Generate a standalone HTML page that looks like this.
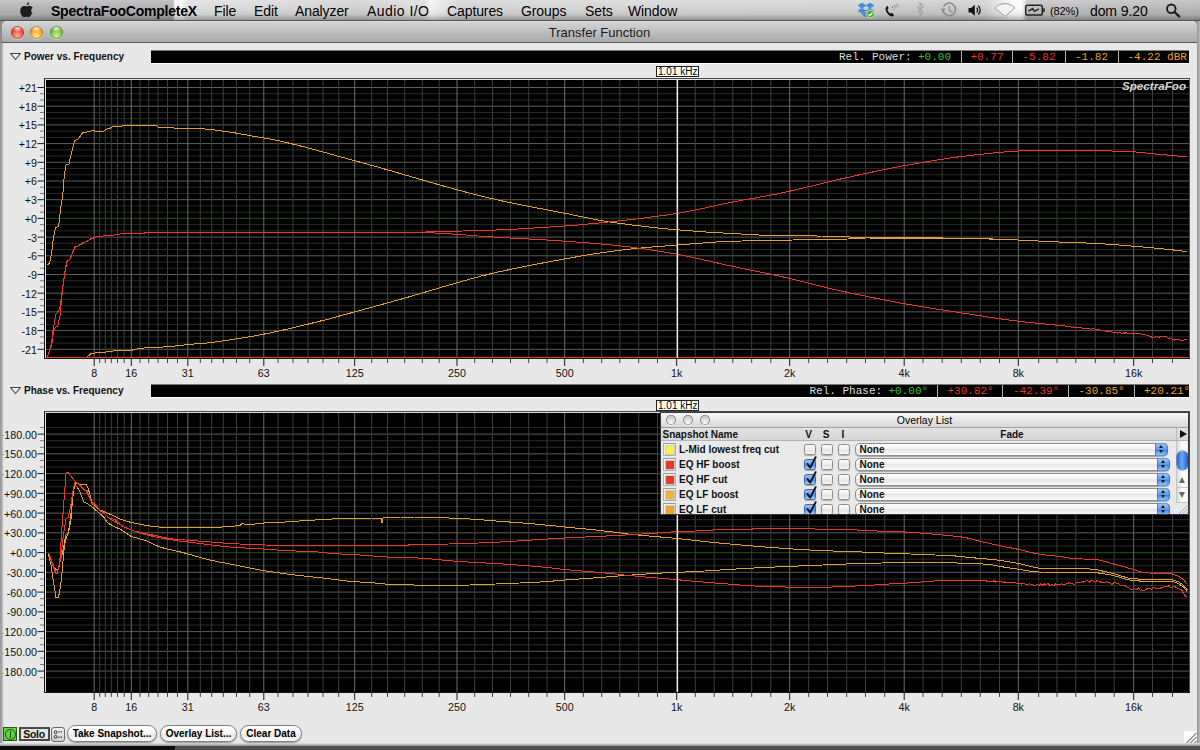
<!DOCTYPE html>
<html><head><meta charset="utf-8"><title>Transfer Function</title>
<style>
html,body{margin:0;padding:0}
body{width:1200px;height:750px;overflow:hidden;position:relative;background:#8c8c8c;font-family:"Liberation Sans", sans-serif;color:#000}
.abs{position:absolute;white-space:nowrap}
#menubar{left:0;top:0;width:1200px;height:21px;background:linear-gradient(to bottom,rgba(255,255,255,.25) 0,rgba(255,255,255,0) 45%,rgba(0,0,0,.06) 72%,rgba(0,0,0,.30) 100%),linear-gradient(to right,#b4b4b4 0px,#aeaeae 173px,#f6f6f6 175px,#f6f6f6 182px,#dcdcdc 187px,#d4d4d4 300px,#cecece 360px,#dcdcdc 424px,#f2f2f2 431px,#e4e4e4 444px,#d2d2d2 460px,#d4d4d4 600px,#d0d0d0 860px,#c8c8c8 900px,#cccccc 985px,#e8e8e8 1002px,#fafafa 1012px,#fafafa 1022px,#bebebe 1027px,#b6b6b6 1200px);border-bottom:1px solid #555;box-sizing:border-box}
#menubar .mi{position:absolute;top:2px;letter-spacing:-0.1px;font-size:14px;line-height:18px;white-space:nowrap}
#win{left:2px;top:21px;width:1195px;height:724px;background:#e8e8e8;border-radius:5px 5px 0 0;overflow:hidden}
#title{left:0;top:0;width:1195px;height:21px;background:linear-gradient(#e4e4e4 0,#d4d4d4 5%,#a8a8a8);border-bottom:1px solid #5a5a5a;text-align:center;font-size:13px;line-height:24px;color:#1a1a1a}
.tl{position:absolute;top:5.2px;width:13px;height:13px;border-radius:50%;box-shadow:0 0 0 0.7px rgba(0,0,0,.35) inset,0 1px 1px rgba(255,255,255,.5)}
.bar{left:151px;width:1038px;height:12px;background:#000;border-top:1px solid #777;border-bottom:1px solid #fff}
.hdr{left:24px;font-size:10px;font-weight:bold;line-height:12px;color:#111}
.tri{left:10px;width:0;height:0;border-left:5px solid transparent;border-right:5px solid transparent;border-top:7px solid #555}
.ro{font-family:"Liberation Mono", monospace;font-size:11px;line-height:12px;top:0;color:#ddd}
.cur{left:656px;width:40px;height:9px;border:1px solid #222;background:#fff;font-size:10px;line-height:10px;padding-left:1px;overflow:hidden}
#ov{background:#e9e9e9;box-shadow:0 0 0 1px #3a3a3a;overflow:hidden}
.gl{width:10px;height:10px;border-radius:50%;background:radial-gradient(circle at 50% 80%,#fafafa,#dcdcdc 45%,#b8b8b8 90%);box-shadow:0 0 0 0.8px #8c8c8c inset,0 1px 0 rgba(255,255,255,.7)}
.ovb{font-size:10px;font-weight:bold;line-height:12px;color:#111}
.sw{width:11px;height:11px;border:1px solid #b0b0b0;border-top-color:#9a9a9a;background:#f2f2f2}
.sw div{position:absolute;left:1.5px;top:1.5px;width:8px;height:8px;box-shadow:0 0 0 0.5px rgba(0,0,0,.35)}
.cb{width:10px;height:9.5px;border-radius:2.5px;border:0.8px solid #8c8c8c;background:linear-gradient(#fdfdfd,#ececec 50%,#e0e0e0 51%,#f8f8f8);box-shadow:0 1px 1px rgba(0,0,0,.25)}
.cb.on{border-color:#3a62b0;background:linear-gradient(#9cc4f4,#5f9cea 50%,#3f84e4 51%,#a8d4fa)}
.pop{height:11.5px;border-radius:5px;border:0.8px solid #8e8e8e;background:linear-gradient(#fff,#f2f2f2 45%,#e6e6e6 50%,#f6f6f6 90%,#fff);box-shadow:0 1px 1px rgba(0,0,0,.3)}
.pop .st{position:absolute;right:-1px;top:-1px;width:13px;height:13px;border-radius:0 5px 5px 0;background:linear-gradient(#a8ccf6,#5a98ec 50%,#3c80e2 51%,#9cd0fa);box-shadow:0 0 0 0.6px #3c62ac inset}
.pop .st i{position:absolute;left:4px;width:0;height:0;border-left:2.5px solid transparent;border-right:2.5px solid transparent}
.pop .st i.u{top:2.5px;border-bottom:3px solid #111}
.pop .st i.d{top:7.5px;border-top:3px solid #111}
.pill{top:725px;height:15px;border:1px solid #7e7e7e;border-radius:9px;background:linear-gradient(#fff,#f4f4f4 50%,#e6e6e6 51%,#fafafa);font-size:10px;font-weight:bold;line-height:15px;text-align:center;box-shadow:0 1px 1.5px rgba(0,0,0,.35)}
</style></head><body>
<div id="menubar" class="abs"><svg class="abs" style="left:0;top:0" width="1200" height="21" viewBox="0 0 1200 21">
<!-- apple -->
<g fill="#1c1c1c"><path d="M26.6 5.2c-.1-1.500 1.100-2.900 2.500-3.300.2 1.600-1.100 3.100-2.500 3.300z"/><path d="M31.900 13.300c-.5 1.200-.8 1.700-1.500 2.700-.9 1.400-2.200 1.500-2.900 1-.9-.5-1.700-.5-2.600 0-.9.500-1.900.400-2.800-.9-2.200-3.100-2.300-6.800-.9-8.600 1-1.400 2.600-1.900 3.900-1.400.9.300 1.500.500 2.100.300.700-.2 1.700-.8 3-.5 1 .2 2 .8 2.600 1.900-2.300 1.400-1.900 4.600.1 5.500z"/></g>
<!-- dropbox -->
<g fill="#3d8fe0" stroke="#2a6fc0" stroke-width=".4"><path d="M862 3l-4 2.600 4 2.600 4-2.600z"/><path d="M870 3l-4 2.600 4 2.600 4-2.600z"/><path d="M858 10.800l4 2.600 4-2.600-4-2.600z"/><path d="M870 8.200l-4 2.600 4 2.600 4-2.600z"/><path d="M862 14.300l4 2.600 4-2.600-4-2.400z"/></g>
<circle cx="870.500" cy="14" r="4" fill="#4aa82a" stroke="#e8e8e8" stroke-width=".8"/><path d="M868.400 14.100l1.500 1.600 2.600-3.200" fill="none" stroke="#fff" stroke-width="1.200"/>
<!-- phone -->
<path d="M886.200 7.200c-1.200 1-.9 3.200.9 5.800 1.900 2.700 4 4 5.600 3.300l1.400-.9-2-2.700-1.300.7c-.6.200-1.500-.5-2.300-1.700-.9-1.200-1.200-2.300-.8-2.800l1.100-.9-1.700-2.300z" fill="#111"/>
<g fill="#666"><circle cx="892.500" cy="7.500" r=".7"/><circle cx="894.700" cy="6" r=".7"/><circle cx="896.800" cy="4.600" r=".7"/><circle cx="893.700" cy="9.300" r=".5"/><circle cx="896" cy="7.800" r=".5"/><circle cx="898" cy="6.400" r=".5"/></g>
<!-- bluetooth -->
<path d="M917 6.300l6.200 6-3.200 3.300v-12.600l3.200 3.300-6.200 6" fill="none" stroke="#a2a2a2" stroke-width="1.100"/>
<!-- time machine -->
<g fill="none" stroke="#8a8a8a" stroke-width="1.500"><path d="M943.200 11.300a6.300 6.300 0 1 0 .3-4.600"/><path d="M949.300 6v4.200l3 1.800" stroke-width="1.200"/></g><path d="M940.600 8.400l5 .3-2.600 3.700z" fill="#8a8a8a"/>
<!-- volume -->
<path d="M968.500 8h2.600l3.700-3.300v11l-3.700-3.300h-2.600z" fill="#111"/><path d="M976.600 7.800a3.200 3.200 0 0 1 0 4.800M978.300 5.800a6 6 0 0 1 0 8.800" fill="none" stroke="#111" stroke-width="1.300"/>
<!-- airport -->
<path d="M1005 16.300l-10-8.300a13.500 13.500 0 0 1 20 0z" fill="#f4f4f4" stroke="#9c9c9c" stroke-width="1"/>
<!-- battery -->
<rect x="1025.700" y="5.200" width="16.600" height="9.800" rx="1.800" fill="none" stroke="#222" stroke-width="1.500"/><rect x="1043.200" y="8.300" width="1.600" height="3.600" fill="#222"/><path d="M1028.500 11.200l4.200-2.600 1.600 2.800 4.600-2.600" fill="none" stroke="#222" stroke-width="1.400"/>
<!-- spotlight -->
<circle cx="1171.300" cy="8.800" r="4.300" fill="none" stroke="#1a1a1a" stroke-width="1.800"/><path d="M1174.500 12l4.800 4.600" stroke="#1a1a1a" stroke-width="2.200" stroke-linecap="round"/>
</svg><span class="mi" style="left:51px;font-weight:bold;letter-spacing:-0.22px;">SpectraFooCompleteX</span><span class="mi" style="left:214px;">File</span><span class="mi" style="left:254px;">Edit</span><span class="mi" style="left:295px;">Analyzer</span><span class="mi" style="left:367px;"><span style="letter-spacing:.45px">Audio I/O</span></span><span class="mi" style="left:447px;">Captures</span><span class="mi" style="left:521px;">Groups</span><span class="mi" style="left:585px;">Sets</span><span class="mi" style="left:628px;">Window</span><span class="mi" style="left:1050px;"><span style="font-size:11px;position:relative;top:-1px">(82%)</span></span><span class="mi" style="left:1090px;">dom 9.20</span></div>
<div id="win" class="abs">
  <div id="title" class="abs">Transfer Function</div>
  <div class="tl" style="left:8.5px;background:radial-gradient(ellipse 45% 28% at 50% 18%,rgba(255,255,255,.85),rgba(255,255,255,0)),radial-gradient(circle at 50% 75%,#ffb0a0,#e8402c 55%,#b02010)"></div>
  <div class="tl" style="left:28px;background:radial-gradient(ellipse 45% 28% at 50% 18%,rgba(255,255,255,.85),rgba(255,255,255,0)),radial-gradient(circle at 50% 75%,#ffe79a,#f0a020 55%,#c07010)"></div>
  <div class="tl" style="left:47.5px;background:radial-gradient(ellipse 45% 28% at 50% 18%,rgba(255,255,255,.85),rgba(255,255,255,0)),radial-gradient(circle at 50% 75%,#d8f0a0,#6cbf3c 55%,#3c8a20)"></div>
</div>
<svg class="abs" style="left:9px;top:52px" width="13" height="9"><path d="M1.500 1.500h10l-5 6z" fill="#e8f0fa" stroke="#444" stroke-width="1.100" stroke-linejoin="round"/></svg>
<div class="abs hdr" style="top:51px">Power vs. Frequency</div>
<div class="abs bar" style="top:50px"><span class="abs ro" style="left:688px;color:#dcdcdc">Rel. Power:</span><span class="abs ro" style="left:767px;color:#35c035">+0.00</span><span class="abs ro" style="left:819.5px;color:#e03a26">+0.77</span><span class="abs ro" style="left:871.5px;color:#e03a26">-5.82</span><span class="abs ro" style="left:924px;color:#e8a030">-1.82</span><span class="abs ro" style="left:976.5px;color:#e8a030">-4.22 dBR</span><span class="abs" style="left:809.5px;top:0;width:1px;height:12px;background:#b0b0b0"></span><span class="abs" style="left:861px;top:0;width:1px;height:12px;background:#b0b0b0"></span><span class="abs" style="left:914px;top:0;width:1px;height:12px;background:#b0b0b0"></span><span class="abs" style="left:966.5px;top:0;width:1px;height:12px;background:#b0b0b0"></span></div>
<svg class="abs" style="left:9px;top:386px" width="13" height="9"><path d="M1.500 1.500h10l-5 6z" fill="#e8f0fa" stroke="#444" stroke-width="1.100" stroke-linejoin="round"/></svg>
<div class="abs hdr" style="top:385px">Phase vs. Frequency</div>
<div class="abs bar" style="top:384px"><span class="abs ro" style="left:658.5px;color:#dcdcdc">Rel. Phase:</span><span class="abs ro" style="left:737.5px;color:#35c035">+0.00°</span><span class="abs ro" style="left:796.5px;color:#e03a26">+30.82°</span><span class="abs ro" style="left:862px;color:#e03a26">-42.39°</span><span class="abs ro" style="left:927.5px;color:#e8a030">-30.85°</span><span class="abs ro" style="left:993px;color:#e8a030">+20.21°</span><span class="abs" style="left:785.5px;top:0;width:1px;height:12px;background:#b0b0b0"></span><span class="abs" style="left:851px;top:0;width:1px;height:12px;background:#b0b0b0"></span><span class="abs" style="left:917px;top:0;width:1px;height:12px;background:#b0b0b0"></span><span class="abs" style="left:982.5px;top:0;width:1px;height:12px;background:#b0b0b0"></span></div>
<svg width="1200" height="750" viewBox="0 0 1200 750" style="position:absolute;left:0;top:0">
<rect x="44" y="78" width="1146" height="281" fill="#4a4a4a"/>
<rect x="44" y="78" width="1" height="281" fill="#161616"/>
<rect x="44" y="358" width="1146" height="1" fill="#161616"/>
<rect x="45" y="79" width="1144" height="279" fill="#e0e0e0"/>
<rect x="46" y="80" width="1143" height="278" fill="#000"/>
<g stroke-width="1"><line x1="46" x2="1189" y1="349.29" y2="349.29" stroke="#5c5c5c"/><line x1="46" x2="1189" y1="343.06" y2="343.06" stroke="#2a2a2a"/><line x1="46" x2="1189" y1="336.83" y2="336.83" stroke="#2a2a2a"/><line x1="46" x2="1189" y1="330.59" y2="330.59" stroke="#5c5c5c"/><line x1="46" x2="1189" y1="324.36" y2="324.36" stroke="#2a2a2a"/><line x1="46" x2="1189" y1="318.13" y2="318.13" stroke="#2a2a2a"/><line x1="46" x2="1189" y1="311.89" y2="311.89" stroke="#5c5c5c"/><line x1="46" x2="1189" y1="305.66" y2="305.66" stroke="#2a2a2a"/><line x1="46" x2="1189" y1="299.43" y2="299.43" stroke="#2a2a2a"/><line x1="46" x2="1189" y1="293.20" y2="293.20" stroke="#5c5c5c"/><line x1="46" x2="1189" y1="286.96" y2="286.96" stroke="#2a2a2a"/><line x1="46" x2="1189" y1="280.73" y2="280.73" stroke="#2a2a2a"/><line x1="46" x2="1189" y1="274.50" y2="274.50" stroke="#5c5c5c"/><line x1="46" x2="1189" y1="268.26" y2="268.26" stroke="#2a2a2a"/><line x1="46" x2="1189" y1="262.03" y2="262.03" stroke="#2a2a2a"/><line x1="46" x2="1189" y1="255.80" y2="255.80" stroke="#5c5c5c"/><line x1="46" x2="1189" y1="249.56" y2="249.56" stroke="#2a2a2a"/><line x1="46" x2="1189" y1="243.33" y2="243.33" stroke="#2a2a2a"/><line x1="46" x2="1189" y1="237.10" y2="237.10" stroke="#5c5c5c"/><line x1="46" x2="1189" y1="230.87" y2="230.87" stroke="#2a2a2a"/><line x1="46" x2="1189" y1="224.63" y2="224.63" stroke="#2a2a2a"/><line x1="46" x2="1189" y1="218.40" y2="218.40" stroke="#1b4210" stroke-width="1.3"/><line x1="46" x2="1189" y1="212.17" y2="212.17" stroke="#2a2a2a"/><line x1="46" x2="1189" y1="205.93" y2="205.93" stroke="#2a2a2a"/><line x1="46" x2="1189" y1="199.70" y2="199.70" stroke="#5c5c5c"/><line x1="46" x2="1189" y1="193.47" y2="193.47" stroke="#2a2a2a"/><line x1="46" x2="1189" y1="187.24" y2="187.24" stroke="#2a2a2a"/><line x1="46" x2="1189" y1="181.00" y2="181.00" stroke="#5c5c5c"/><line x1="46" x2="1189" y1="174.77" y2="174.77" stroke="#2a2a2a"/><line x1="46" x2="1189" y1="168.54" y2="168.54" stroke="#2a2a2a"/><line x1="46" x2="1189" y1="162.30" y2="162.30" stroke="#5c5c5c"/><line x1="46" x2="1189" y1="156.07" y2="156.07" stroke="#2a2a2a"/><line x1="46" x2="1189" y1="149.84" y2="149.84" stroke="#2a2a2a"/><line x1="46" x2="1189" y1="143.60" y2="143.60" stroke="#5c5c5c"/><line x1="46" x2="1189" y1="137.37" y2="137.37" stroke="#2a2a2a"/><line x1="46" x2="1189" y1="131.14" y2="131.14" stroke="#2a2a2a"/><line x1="46" x2="1189" y1="124.91" y2="124.91" stroke="#5c5c5c"/><line x1="46" x2="1189" y1="118.67" y2="118.67" stroke="#2a2a2a"/><line x1="46" x2="1189" y1="112.44" y2="112.44" stroke="#2a2a2a"/><line x1="46" x2="1189" y1="106.21" y2="106.21" stroke="#5c5c5c"/><line x1="46" x2="1189" y1="99.97" y2="99.97" stroke="#2a2a2a"/><line x1="46" x2="1189" y1="93.74" y2="93.74" stroke="#2a2a2a"/><line x1="46" x2="1189" y1="87.51" y2="87.51" stroke="#5c5c5c"/><line x1="94.20" x2="94.20" y1="80" y2="358" stroke="#6c6c6c"/><line x1="99.70" x2="99.70" y1="80" y2="358" stroke="#3c3c3c"/><line x1="105.30" x2="105.30" y1="80" y2="358" stroke="#3c3c3c"/><line x1="111.30" x2="111.30" y1="80" y2="358" stroke="#3c3c3c"/><line x1="117.50" x2="117.50" y1="80" y2="358" stroke="#3c3c3c"/><line x1="124.20" x2="124.20" y1="80" y2="358" stroke="#3c3c3c"/><line x1="131.30" x2="131.30" y1="80" y2="358" stroke="#6c6c6c"/><line x1="140.00" x2="140.00" y1="80" y2="358" stroke="#3c3c3c"/><line x1="148.70" x2="148.70" y1="80" y2="358" stroke="#3c3c3c"/><line x1="158.00" x2="158.00" y1="80" y2="358" stroke="#3c3c3c"/><line x1="167.50" x2="167.50" y1="80" y2="358" stroke="#3c3c3c"/><line x1="177.50" x2="177.50" y1="80" y2="358" stroke="#3c3c3c"/><line x1="187.80" x2="187.80" y1="80" y2="358" stroke="#6c6c6c"/><line x1="200.30" x2="200.30" y1="80" y2="358" stroke="#3c3c3c"/><line x1="211.70" x2="211.70" y1="80" y2="358" stroke="#3c3c3c"/><line x1="223.30" x2="223.30" y1="80" y2="358" stroke="#3c3c3c"/><line x1="236.50" x2="236.50" y1="80" y2="358" stroke="#3c3c3c"/><line x1="249.70" x2="249.70" y1="80" y2="358" stroke="#3c3c3c"/><line x1="263.80" x2="263.80" y1="80" y2="358" stroke="#6c6c6c"/><line x1="278.00" x2="278.00" y1="80" y2="358" stroke="#3c3c3c"/><line x1="293.00" x2="293.00" y1="80" y2="358" stroke="#3c3c3c"/><line x1="308.00" x2="308.00" y1="80" y2="358" stroke="#3c3c3c"/><line x1="323.00" x2="323.00" y1="80" y2="358" stroke="#3c3c3c"/><line x1="338.70" x2="338.70" y1="80" y2="358" stroke="#3c3c3c"/><line x1="354.70" x2="354.70" y1="80" y2="358" stroke="#6c6c6c"/><line x1="371.70" x2="371.70" y1="80" y2="358" stroke="#3c3c3c"/><line x1="387.50" x2="387.50" y1="80" y2="358" stroke="#3c3c3c"/><line x1="404.70" x2="404.70" y1="80" y2="358" stroke="#3c3c3c"/><line x1="422.30" x2="422.30" y1="80" y2="358" stroke="#3c3c3c"/><line x1="439.20" x2="439.20" y1="80" y2="358" stroke="#3c3c3c"/><line x1="457.00" x2="457.00" y1="80" y2="358" stroke="#6c6c6c"/><line x1="474.70" x2="474.70" y1="80" y2="358" stroke="#3c3c3c"/><line x1="492.50" x2="492.50" y1="80" y2="358" stroke="#3c3c3c"/><line x1="510.50" x2="510.50" y1="80" y2="358" stroke="#3c3c3c"/><line x1="528.70" x2="528.70" y1="80" y2="358" stroke="#3c3c3c"/><line x1="547.00" x2="547.00" y1="80" y2="358" stroke="#3c3c3c"/><line x1="564.70" x2="564.70" y1="80" y2="358" stroke="#6c6c6c"/><line x1="583.30" x2="583.30" y1="80" y2="358" stroke="#3c3c3c"/><line x1="601.70" x2="601.70" y1="80" y2="358" stroke="#3c3c3c"/><line x1="619.80" x2="619.80" y1="80" y2="358" stroke="#3c3c3c"/><line x1="638.70" x2="638.70" y1="80" y2="358" stroke="#3c3c3c"/><line x1="657.50" x2="657.50" y1="80" y2="358" stroke="#3c3c3c"/><line x1="676.70" x2="676.70" y1="80" y2="358" stroke="#6c6c6c"/><line x1="695.30" x2="695.30" y1="80" y2="358" stroke="#3c3c3c"/><line x1="714.20" x2="714.20" y1="80" y2="358" stroke="#3c3c3c"/><line x1="732.80" x2="732.80" y1="80" y2="358" stroke="#3c3c3c"/><line x1="751.70" x2="751.70" y1="80" y2="358" stroke="#3c3c3c"/><line x1="770.80" x2="770.80" y1="80" y2="358" stroke="#3c3c3c"/><line x1="789.70" x2="789.70" y1="80" y2="358" stroke="#6c6c6c"/><line x1="808.70" x2="808.70" y1="80" y2="358" stroke="#3c3c3c"/><line x1="827.50" x2="827.50" y1="80" y2="358" stroke="#3c3c3c"/><line x1="846.70" x2="846.70" y1="80" y2="358" stroke="#3c3c3c"/><line x1="865.50" x2="865.50" y1="80" y2="358" stroke="#3c3c3c"/><line x1="884.70" x2="884.70" y1="80" y2="358" stroke="#3c3c3c"/><line x1="904.20" x2="904.20" y1="80" y2="358" stroke="#6c6c6c"/><line x1="923.00" x2="923.00" y1="80" y2="358" stroke="#3c3c3c"/><line x1="942.20" x2="942.20" y1="80" y2="358" stroke="#3c3c3c"/><line x1="961.30" x2="961.30" y1="80" y2="358" stroke="#3c3c3c"/><line x1="980.30" x2="980.30" y1="80" y2="358" stroke="#3c3c3c"/><line x1="999.50" x2="999.50" y1="80" y2="358" stroke="#3c3c3c"/><line x1="1018.30" x2="1018.30" y1="80" y2="358" stroke="#6c6c6c"/><line x1="1038.70" x2="1038.70" y1="80" y2="358" stroke="#3c3c3c"/><line x1="1057.00" x2="1057.00" y1="80" y2="358" stroke="#3c3c3c"/><line x1="1075.80" x2="1075.80" y1="80" y2="358" stroke="#3c3c3c"/><line x1="1095.30" x2="1095.30" y1="80" y2="358" stroke="#3c3c3c"/><line x1="1114.20" x2="1114.20" y1="80" y2="358" stroke="#3c3c3c"/><line x1="1133.70" x2="1133.70" y1="80" y2="358" stroke="#6c6c6c"/><line x1="1152.50" x2="1152.50" y1="80" y2="358" stroke="#3c3c3c"/><line x1="1172.50" x2="1172.50" y1="80" y2="358" stroke="#3c3c3c"/></g>
<g font-family='"Liberation Sans", sans-serif' font-size="10.7" fill="#111"><line x1="37.5" x2="44" y1="349.29" y2="349.29" stroke="#1a1a1a"/><text x="37" y="353.7" text-anchor="end">-21</text><line x1="40" x2="44" y1="343.06" y2="343.06" stroke="#777"/><line x1="40" x2="44" y1="336.83" y2="336.83" stroke="#777"/><line x1="37.5" x2="44" y1="330.59" y2="330.59" stroke="#1a1a1a"/><text x="37" y="335.0" text-anchor="end">-18</text><line x1="40" x2="44" y1="324.36" y2="324.36" stroke="#777"/><line x1="40" x2="44" y1="318.13" y2="318.13" stroke="#777"/><line x1="37.5" x2="44" y1="311.89" y2="311.89" stroke="#1a1a1a"/><text x="37" y="316.3" text-anchor="end">-15</text><line x1="40" x2="44" y1="305.66" y2="305.66" stroke="#777"/><line x1="40" x2="44" y1="299.43" y2="299.43" stroke="#777"/><line x1="37.5" x2="44" y1="293.20" y2="293.20" stroke="#1a1a1a"/><text x="37" y="297.6" text-anchor="end">-12</text><line x1="40" x2="44" y1="286.96" y2="286.96" stroke="#777"/><line x1="40" x2="44" y1="280.73" y2="280.73" stroke="#777"/><line x1="37.5" x2="44" y1="274.50" y2="274.50" stroke="#1a1a1a"/><text x="37" y="278.9" text-anchor="end">-9</text><line x1="40" x2="44" y1="268.26" y2="268.26" stroke="#777"/><line x1="40" x2="44" y1="262.03" y2="262.03" stroke="#777"/><line x1="37.5" x2="44" y1="255.80" y2="255.80" stroke="#1a1a1a"/><text x="37" y="260.2" text-anchor="end">-6</text><line x1="40" x2="44" y1="249.56" y2="249.56" stroke="#777"/><line x1="40" x2="44" y1="243.33" y2="243.33" stroke="#777"/><line x1="37.5" x2="44" y1="237.10" y2="237.10" stroke="#1a1a1a"/><text x="37" y="241.5" text-anchor="end">-3</text><line x1="40" x2="44" y1="230.87" y2="230.87" stroke="#777"/><line x1="40" x2="44" y1="224.63" y2="224.63" stroke="#777"/><line x1="37.5" x2="44" y1="218.40" y2="218.40" stroke="#1a1a1a"/><text x="37" y="222.8" text-anchor="end">+0</text><line x1="40" x2="44" y1="212.17" y2="212.17" stroke="#777"/><line x1="40" x2="44" y1="205.93" y2="205.93" stroke="#777"/><line x1="37.5" x2="44" y1="199.70" y2="199.70" stroke="#1a1a1a"/><text x="37" y="204.1" text-anchor="end">+3</text><line x1="40" x2="44" y1="193.47" y2="193.47" stroke="#777"/><line x1="40" x2="44" y1="187.24" y2="187.24" stroke="#777"/><line x1="37.5" x2="44" y1="181.00" y2="181.00" stroke="#1a1a1a"/><text x="37" y="185.4" text-anchor="end">+6</text><line x1="40" x2="44" y1="174.77" y2="174.77" stroke="#777"/><line x1="40" x2="44" y1="168.54" y2="168.54" stroke="#777"/><line x1="37.5" x2="44" y1="162.30" y2="162.30" stroke="#1a1a1a"/><text x="37" y="166.7" text-anchor="end">+9</text><line x1="40" x2="44" y1="156.07" y2="156.07" stroke="#777"/><line x1="40" x2="44" y1="149.84" y2="149.84" stroke="#777"/><line x1="37.5" x2="44" y1="143.60" y2="143.60" stroke="#1a1a1a"/><text x="37" y="148.0" text-anchor="end">+12</text><line x1="40" x2="44" y1="137.37" y2="137.37" stroke="#777"/><line x1="40" x2="44" y1="131.14" y2="131.14" stroke="#777"/><line x1="37.5" x2="44" y1="124.91" y2="124.91" stroke="#1a1a1a"/><text x="37" y="129.3" text-anchor="end">+15</text><line x1="40" x2="44" y1="118.67" y2="118.67" stroke="#777"/><line x1="40" x2="44" y1="112.44" y2="112.44" stroke="#777"/><line x1="37.5" x2="44" y1="106.21" y2="106.21" stroke="#1a1a1a"/><text x="37" y="110.6" text-anchor="end">+18</text><line x1="40" x2="44" y1="99.97" y2="99.97" stroke="#777"/><line x1="40" x2="44" y1="93.74" y2="93.74" stroke="#777"/><line x1="37.5" x2="44" y1="87.51" y2="87.51" stroke="#1a1a1a"/><text x="37" y="91.9" text-anchor="end">+21</text><line x1="94.20" x2="94.20" y1="359" y2="366" stroke="#1a1a1a"/><text x="94.2" y="377" text-anchor="middle">8</text><line x1="99.70" x2="99.70" y1="359" y2="363" stroke="#444"/><line x1="105.30" x2="105.30" y1="359" y2="363" stroke="#444"/><line x1="111.30" x2="111.30" y1="359" y2="363" stroke="#444"/><line x1="117.50" x2="117.50" y1="359" y2="363" stroke="#444"/><line x1="124.20" x2="124.20" y1="359" y2="363" stroke="#444"/><line x1="131.30" x2="131.30" y1="359" y2="366" stroke="#1a1a1a"/><text x="131.3" y="377" text-anchor="middle">16</text><line x1="140.00" x2="140.00" y1="359" y2="363" stroke="#444"/><line x1="148.70" x2="148.70" y1="359" y2="363" stroke="#444"/><line x1="158.00" x2="158.00" y1="359" y2="363" stroke="#444"/><line x1="167.50" x2="167.50" y1="359" y2="363" stroke="#444"/><line x1="177.50" x2="177.50" y1="359" y2="363" stroke="#444"/><line x1="187.80" x2="187.80" y1="359" y2="366" stroke="#1a1a1a"/><text x="187.8" y="377" text-anchor="middle">31</text><line x1="200.30" x2="200.30" y1="359" y2="363" stroke="#444"/><line x1="211.70" x2="211.70" y1="359" y2="363" stroke="#444"/><line x1="223.30" x2="223.30" y1="359" y2="363" stroke="#444"/><line x1="236.50" x2="236.50" y1="359" y2="363" stroke="#444"/><line x1="249.70" x2="249.70" y1="359" y2="363" stroke="#444"/><line x1="263.80" x2="263.80" y1="359" y2="366" stroke="#1a1a1a"/><text x="263.8" y="377" text-anchor="middle">63</text><line x1="278.00" x2="278.00" y1="359" y2="363" stroke="#444"/><line x1="293.00" x2="293.00" y1="359" y2="363" stroke="#444"/><line x1="308.00" x2="308.00" y1="359" y2="363" stroke="#444"/><line x1="323.00" x2="323.00" y1="359" y2="363" stroke="#444"/><line x1="338.70" x2="338.70" y1="359" y2="363" stroke="#444"/><line x1="354.70" x2="354.70" y1="359" y2="366" stroke="#1a1a1a"/><text x="354.7" y="377" text-anchor="middle">125</text><line x1="371.70" x2="371.70" y1="359" y2="363" stroke="#444"/><line x1="387.50" x2="387.50" y1="359" y2="363" stroke="#444"/><line x1="404.70" x2="404.70" y1="359" y2="363" stroke="#444"/><line x1="422.30" x2="422.30" y1="359" y2="363" stroke="#444"/><line x1="439.20" x2="439.20" y1="359" y2="363" stroke="#444"/><line x1="457.00" x2="457.00" y1="359" y2="366" stroke="#1a1a1a"/><text x="457.0" y="377" text-anchor="middle">250</text><line x1="474.70" x2="474.70" y1="359" y2="363" stroke="#444"/><line x1="492.50" x2="492.50" y1="359" y2="363" stroke="#444"/><line x1="510.50" x2="510.50" y1="359" y2="363" stroke="#444"/><line x1="528.70" x2="528.70" y1="359" y2="363" stroke="#444"/><line x1="547.00" x2="547.00" y1="359" y2="363" stroke="#444"/><line x1="564.70" x2="564.70" y1="359" y2="366" stroke="#1a1a1a"/><text x="564.7" y="377" text-anchor="middle">500</text><line x1="583.30" x2="583.30" y1="359" y2="363" stroke="#444"/><line x1="601.70" x2="601.70" y1="359" y2="363" stroke="#444"/><line x1="619.80" x2="619.80" y1="359" y2="363" stroke="#444"/><line x1="638.70" x2="638.70" y1="359" y2="363" stroke="#444"/><line x1="657.50" x2="657.50" y1="359" y2="363" stroke="#444"/><line x1="676.70" x2="676.70" y1="359" y2="366" stroke="#1a1a1a"/><text x="676.7" y="377" text-anchor="middle">1k</text><line x1="695.30" x2="695.30" y1="359" y2="363" stroke="#444"/><line x1="714.20" x2="714.20" y1="359" y2="363" stroke="#444"/><line x1="732.80" x2="732.80" y1="359" y2="363" stroke="#444"/><line x1="751.70" x2="751.70" y1="359" y2="363" stroke="#444"/><line x1="770.80" x2="770.80" y1="359" y2="363" stroke="#444"/><line x1="789.70" x2="789.70" y1="359" y2="366" stroke="#1a1a1a"/><text x="789.7" y="377" text-anchor="middle">2k</text><line x1="808.70" x2="808.70" y1="359" y2="363" stroke="#444"/><line x1="827.50" x2="827.50" y1="359" y2="363" stroke="#444"/><line x1="846.70" x2="846.70" y1="359" y2="363" stroke="#444"/><line x1="865.50" x2="865.50" y1="359" y2="363" stroke="#444"/><line x1="884.70" x2="884.70" y1="359" y2="363" stroke="#444"/><line x1="904.20" x2="904.20" y1="359" y2="366" stroke="#1a1a1a"/><text x="904.2" y="377" text-anchor="middle">4k</text><line x1="923.00" x2="923.00" y1="359" y2="363" stroke="#444"/><line x1="942.20" x2="942.20" y1="359" y2="363" stroke="#444"/><line x1="961.30" x2="961.30" y1="359" y2="363" stroke="#444"/><line x1="980.30" x2="980.30" y1="359" y2="363" stroke="#444"/><line x1="999.50" x2="999.50" y1="359" y2="363" stroke="#444"/><line x1="1018.30" x2="1018.30" y1="359" y2="366" stroke="#1a1a1a"/><text x="1018.3" y="377" text-anchor="middle">8k</text><line x1="1038.70" x2="1038.70" y1="359" y2="363" stroke="#444"/><line x1="1057.00" x2="1057.00" y1="359" y2="363" stroke="#444"/><line x1="1075.80" x2="1075.80" y1="359" y2="363" stroke="#444"/><line x1="1095.30" x2="1095.30" y1="359" y2="363" stroke="#444"/><line x1="1114.20" x2="1114.20" y1="359" y2="363" stroke="#444"/><line x1="1133.70" x2="1133.70" y1="359" y2="366" stroke="#1a1a1a"/><text x="1133.7" y="377" text-anchor="middle">16k</text><line x1="1152.50" x2="1152.50" y1="359" y2="363" stroke="#444"/><line x1="1172.50" x2="1172.50" y1="359" y2="363" stroke="#444"/></g>
<g fill="none" stroke-width="1" stroke-linejoin="round" shape-rendering="crispEdges"><path d="M47.6,265.2 L49.5,262.7 L50.8,257.6 L52.0,250.0 L53.3,238.6 L55.5,227.8 L58.4,226.5 L59.3,222.1 L60.3,210.7 L61.8,201.8 L63.1,191.0 L64.3,175.8 L66.0,165.0 L68.9,164.3 L70.5,157.0 L73.2,146.0 L74.8,140.2 L77.4,139.9 L82.8,132.6 L86.9,132.0 L93.2,130.4 L95.7,131.4 L103.3,131.4 L105.9,129.2 L110.3,128.2 L112.8,126.7 L121.1,126.7 L122.3,125.9 L156.6,125.9 L157.8,127.0 L162.7,127.0 L167.5,127.0 L172.4,127.0 L173.7,128.0 L177.8,128.1 L181.8,128.1 L185.9,128.2 L190.0,128.2 L194.1,128.3 L198.2,128.5 L202.2,128.8 L206.3,129.1 L210.4,129.5 L214.5,130.0 L218.6,130.5 L222.7,131.1 L226.8,131.7 L230.8,132.3 L234.9,132.9 L239.0,133.6 L243.1,134.3 L247.2,135.0 L251.2,135.8 L255.3,136.5 L259.4,137.2 L263.5,137.9 L267.6,138.6 L271.8,139.4 L275.9,140.3 L280.1,141.1 L284.2,142.0 L288.4,143.0 L292.5,144.0 L296.7,145.0 L300.8,146.1 L305.0,147.1 L309.1,148.2 L313.2,149.3 L317.4,150.5 L321.5,151.6 L325.7,152.7 L329.8,153.9 L334.0,155.0 L338.1,156.2 L342.3,157.3 L346.4,158.5 L350.6,159.6 L354.7,160.7 L358.8,161.8 L362.9,162.9 L367.0,164.0 L371.1,165.2 L375.2,166.3 L379.3,167.5 L383.4,168.7 L387.5,169.9 L391.6,171.0 L395.7,172.2 L399.8,173.4 L403.9,174.6 L408.1,175.8 L412.2,177.0 L416.3,178.2 L420.4,179.4 L424.5,180.6 L428.6,181.8 L432.7,183.0 L436.8,184.1 L440.9,185.3 L445.0,186.4 L449.1,187.6 L453.2,188.7 L457.3,189.8 L461.4,190.9 L465.5,192.0 L469.6,193.1 L473.6,194.2 L477.7,195.2 L481.8,196.2 L485.9,197.2 L490.0,198.2 L494.2,199.1 L498.3,200.1 L502.5,201.0 L506.6,201.9 L510.8,202.7 L515.0,203.6 L519.1,204.4 L523.3,205.2 L527.5,206.1 L531.6,206.9 L535.8,207.7 L539.9,208.5 L544.1,209.3 L548.3,210.1 L552.4,210.9 L556.6,211.7 L560.7,212.5 L564.9,213.3 L569.2,214.1 L573.4,215.0 L577.7,215.9 L581.9,216.7 L586.2,217.6 L590.4,218.5 L594.7,219.3 L598.9,220.1 L603.2,220.8 L607.4,221.5 L611.7,222.2 L615.8,222.8 L619.9,223.4 L624.1,223.9 L628.2,224.5 L632.3,225.0 L636.4,225.5 L640.5,226.0 L644.7,226.5 L648.8,227.0 L652.9,227.4 L657.0,227.9 L661.1,228.3 L665.2,228.7 L669.4,229.1 L673.5,229.4 L677.6,229.8 L681.9,230.2 L686.2,230.5 L690.5,230.8 L694.8,231.2 L699.1,231.5 L703.4,231.8 L707.6,232.1 L711.9,232.3 L716.2,232.6 L720.5,232.9 L724.8,233.1 L729.1,233.4 L733.4,233.6 L737.6,233.8 L741.9,234.1 L746.1,234.3 L750.3,234.6 L754.6,234.8 L758.8,235.0 L763.1,235.2 L767.3,235.4 L771.5,235.5 L775.8,235.6 L780.0,235.7 L784.1,235.7 L788.2,235.8 L792.4,235.8 L796.5,235.8 L800.6,235.8 L804.8,235.8 L808.9,235.9 L813.0,235.9 L817.1,236.0 L821.2,236.0 L825.2,236.1 L829.3,236.3 L833.4,236.4 L837.5,236.6 L841.5,236.7 L845.6,236.9 L849.7,237.0 L853.8,237.1 L857.8,237.2 L861.9,237.3 L866.0,237.4 L870.0,237.4 L874.1,237.5 L878.1,237.5 L882.2,237.6 L886.2,237.6 L890.3,237.6 L894.4,237.6 L898.4,237.7 L902.5,237.7 L906.5,237.7 L910.5,237.7 L914.6,237.7 L918.6,237.8 L922.7,237.8 L926.8,237.8 L930.8,237.8 L934.9,237.9 L938.9,237.9 L943.0,238.0 L947.0,238.0 L951.2,238.1 L955.4,238.1 L959.5,238.2 L963.7,238.3 L967.9,238.4 L972.1,238.5 L976.2,238.6 L980.4,238.7 L984.6,238.8 L988.8,239.0 L992.9,239.1 L997.1,239.2 L1001.3,239.4 L1005.5,239.5 L1009.6,239.7 L1013.8,239.8 L1018.0,240.0 L1022.0,240.2 L1026.0,240.4 L1030.0,240.6 L1034.0,240.8 L1038.0,241.0 L1042.0,241.2 L1046.0,241.4 L1050.0,241.6 L1054.3,241.8 L1058.5,242.0 L1062.8,242.1 L1067.0,242.3 L1071.3,242.4 L1075.5,242.6 L1079.8,242.7 L1084.0,242.9 L1088.3,243.1 L1092.5,243.3 L1096.8,243.5 L1100.9,243.7 L1105.0,244.0 L1109.1,244.3 L1113.2,244.6 L1117.3,244.9 L1121.4,245.2 L1125.5,245.5 L1129.6,245.9 L1133.7,246.2 L1137.8,246.5 L1141.8,246.9 L1145.8,247.3 L1149.9,247.6 L1154.0,248.0 L1158.0,248.4 L1162.1,248.8 L1166.3,249.2 L1170.4,249.7 L1174.5,250.1 L1178.6,250.6 L1182.8,251.1 L1186.9,251.5" stroke="#e0a030"/><path d="M87.5,356.7 L90.8,353.7 L97.5,352.5 L111.7,351.7 L114.2,350.0 L132.5,350.0 L140.0,348.3 L144.2,348.0 L148.3,347.8 L152.5,347.7 L156.7,347.5 L160.7,347.2 L164.7,346.9 L168.7,346.6 L172.7,346.2 L176.7,345.8 L181.1,345.3 L185.6,344.8 L190.0,344.3 L194.2,344.0 L198.3,343.7 L202.5,343.4 L206.7,343.0 L210.8,342.5 L215.0,342.0 L219.2,341.4 L223.3,340.8 L227.3,340.2 L231.3,339.6 L235.4,339.0 L239.4,338.4 L243.4,337.7 L247.4,337.1 L251.4,336.4 L255.5,335.7 L259.5,335.0 L263.5,334.2 L267.6,333.4 L271.7,332.6 L275.8,331.7 L279.9,330.8 L284.0,329.9 L288.1,329.0 L292.1,328.0 L296.2,327.0 L300.3,326.0 L304.4,325.0 L308.5,324.0 L312.6,323.0 L316.7,322.0 L320.9,320.9 L325.1,319.9 L329.4,318.8 L333.6,317.6 L337.8,316.5 L342.0,315.3 L346.3,314.2 L350.5,313.0 L354.7,311.9 L358.9,310.8 L363.1,309.6 L367.4,308.5 L371.6,307.3 L375.8,306.1 L380.0,305.0 L384.3,303.8 L388.5,302.6 L392.7,301.5 L396.9,300.3 L401.2,299.1 L405.4,297.9 L409.7,296.7 L414.0,295.4 L418.4,294.1 L422.7,292.8 L427.0,291.6 L431.4,290.3 L435.7,289.0 L440.0,287.7 L444.3,286.4 L448.6,285.2 L453.0,283.9 L457.3,282.7 L461.4,281.6 L465.5,280.4 L469.6,279.2 L473.6,278.1 L477.7,277.0 L481.8,275.9 L485.9,274.9 L490.0,273.9 L494.2,272.9 L498.3,272.0 L502.5,271.1 L506.6,270.2 L510.8,269.3 L515.0,268.4 L519.1,267.5 L523.3,266.7 L527.5,265.9 L531.6,265.1 L535.8,264.3 L539.9,263.5 L544.1,262.7 L548.3,261.9 L552.4,261.1 L556.6,260.4 L560.7,259.6 L564.9,258.9 L569.2,258.1 L573.4,257.4 L577.7,256.6 L581.9,255.9 L586.2,255.2 L590.4,254.5 L594.7,253.8 L598.9,253.1 L603.2,252.5 L607.4,251.9 L611.7,251.3 L616.4,250.7 L621.0,250.1 L625.7,249.6 L630.3,249.1 L635.0,248.6 L639.6,248.1 L643.8,247.7 L648.0,247.3 L652.3,247.0 L656.5,246.6 L660.7,246.3 L664.9,246.0 L669.2,245.6 L673.4,245.3 L677.6,245.0 L681.9,244.7 L686.2,244.3 L690.5,244.0 L694.8,243.6 L699.1,243.3 L703.4,243.0 L707.6,242.6 L711.9,242.3 L716.2,242.0 L720.5,241.8 L724.8,241.6 L729.1,241.4 L733.4,241.2 L737.6,241.1 L741.9,241.0 L746.1,240.8 L750.3,240.8 L754.6,240.7 L758.8,240.6 L763.1,240.5 L767.3,240.4 L771.5,240.4 L775.8,240.3 L780.0,240.2 L784.2,240.1 L788.4,240.1 L792.6,240.0 L796.8,239.9 L801.0,239.9 L805.2,239.8 L809.4,239.8 L813.6,239.7 L817.8,239.7 L822.0,239.6 L826.2,239.6 L830.4,239.5 L834.6,239.4 L838.8,239.3 L843.0,239.2 L847.6,239.0 L852.2,238.7 L856.8,238.4 L861.4,238.1 L866.0,238.0 L870.0,238.0 L874.1,238.0 L878.1,238.0 L882.2,238.0 L886.2,238.0 L890.3,238.0 L894.4,238.0 L898.4,238.0 L902.5,238.0 L906.5,238.0 L910.5,238.0 L914.6,238.0 L918.6,238.0 L922.7,238.0 L926.8,238.0 L930.8,238.0 L934.9,238.0 L938.9,238.0 L943.0,238.0 L947.0,238.0 L951.2,238.0 L955.4,238.0 L959.5,238.1 L963.7,238.2 L967.9,238.3 L972.1,238.4 L976.2,238.5 L980.4,238.6 L984.6,238.7 L988.8,238.9 L992.9,239.0 L997.1,239.2 L1001.3,239.4 L1005.5,239.5 L1009.6,239.7 L1013.8,239.8 L1018.0,240.0 L1022.0,240.2 L1026.0,240.4 L1030.0,240.6 L1034.0,240.8 L1038.0,241.0 L1042.0,241.2 L1046.0,241.4 L1050.0,241.6 L1054.3,241.8 L1058.5,242.0 L1062.8,242.1 L1067.0,242.3 L1071.3,242.4 L1075.5,242.6 L1079.8,242.7 L1084.0,242.9 L1088.3,243.1 L1092.5,243.3 L1096.8,243.5 L1100.9,243.7 L1105.0,244.0 L1109.1,244.3 L1113.2,244.6 L1117.3,244.9 L1121.4,245.2 L1125.5,245.5 L1129.6,245.9 L1133.7,246.2 L1137.8,246.5 L1141.8,246.9 L1145.8,247.3 L1149.9,247.6 L1154.0,248.0 L1158.0,248.4 L1162.1,248.8 L1166.3,249.2 L1170.4,249.7 L1174.5,250.1 L1178.6,250.6 L1182.8,251.1 L1186.9,251.5" stroke="#e0a030"/><path d="M47.1,357.4 L51.4,344.4 L53.3,328.6 L55.8,314.6 L59.6,309.5 L60.9,300.7 L62.8,286.7 L64.7,272.8 L66.6,261.4 L69.8,259.5 L73.6,250.0 L74.8,246.8 L78.0,246.2 L83.1,242.4 L86.9,241.7 L90.7,238.6 L94.5,237.5 L98.3,236.4 L111.0,235.4 L121.1,233.9 L141.4,233.5 L145.2,232.9 L149.3,232.7 L153.3,232.6 L157.4,232.5 L161.5,232.4 L165.6,232.3 L169.6,232.2 L173.7,232.2 L177.8,232.1 L181.9,232.1 L185.9,232.1 L190.0,232.1 L194.0,232.1 L198.0,232.1 L202.0,232.1 L206.0,232.1 L210.0,232.1 L214.0,232.1 L218.0,232.1 L222.0,232.1 L226.0,232.1 L230.0,232.1 L234.0,232.1 L238.0,232.1 L242.0,232.1 L246.0,232.1 L250.0,232.1 L254.0,232.1 L258.0,232.1 L262.0,232.1 L266.0,232.1 L270.0,232.1 L274.0,232.1 L278.0,232.1 L282.0,232.1 L286.0,232.1 L290.0,232.1 L294.0,232.1 L298.0,232.1 L302.0,232.1 L306.0,232.1 L310.0,232.1 L314.0,232.1 L318.0,232.1 L322.0,232.1 L326.0,232.1 L330.0,232.1 L334.0,232.1 L338.0,232.1 L342.0,232.1 L346.0,232.1 L350.0,232.1 L354.0,232.1 L358.0,232.1 L362.0,232.1 L366.0,232.1 L370.0,232.1 L374.0,232.1 L378.0,232.1 L382.0,232.1 L386.0,232.1 L390.0,232.1 L394.0,232.1 L398.0,232.1 L402.0,232.1 L406.0,232.1 L410.0,232.1 L414.0,232.1 L418.0,232.1 L422.1,232.1 L426.1,232.0 L430.2,231.9 L434.2,231.8 L438.3,231.7 L442.4,231.6 L446.4,231.5 L450.5,231.3 L454.5,231.2 L458.6,231.1 L462.9,231.0 L467.2,230.9 L471.4,230.8 L475.7,230.7 L480.0,230.6 L484.0,230.5 L488.1,230.3 L492.1,230.2 L496.2,230.0 L500.2,229.8 L504.3,229.7 L508.3,229.5 L512.3,229.3 L516.4,229.1 L520.4,228.8 L524.5,228.6 L528.5,228.4 L532.6,228.1 L536.6,227.9 L540.6,227.6 L544.7,227.4 L548.7,227.1 L552.8,226.8 L556.8,226.6 L560.9,226.3 L564.9,226.0 L569.2,225.7 L573.4,225.4 L577.7,225.0 L581.9,224.6 L586.2,224.2 L590.4,223.8 L594.7,223.4 L598.9,223.0 L603.2,222.6 L607.4,222.1 L611.7,221.7 L615.8,221.3 L620.0,220.8 L624.1,220.4 L628.2,219.9 L632.3,219.4 L636.5,218.9 L640.6,218.4 L644.7,217.9 L648.8,217.4 L652.9,216.8 L657.0,216.3 L661.2,215.8 L665.3,215.2 L669.4,214.6 L673.5,214.0 L677.6,213.3 L681.9,212.6 L686.2,211.8 L690.5,211.0 L694.8,210.1 L699.1,209.2 L703.4,208.3 L707.6,207.3 L711.9,206.4 L716.2,205.5 L720.5,204.5 L724.8,203.6 L729.1,202.8 L733.4,201.9 L737.6,201.1 L741.9,200.3 L746.1,199.5 L750.3,198.8 L754.6,198.0 L758.8,197.3 L763.1,196.5 L767.3,195.8 L771.5,195.0 L775.8,194.2 L780.0,193.3 L784.2,192.4 L788.4,191.5 L792.7,190.5 L796.9,189.6 L801.1,188.5 L805.3,187.5 L809.5,186.5 L813.8,185.5 L818.0,184.4 L822.2,183.4 L826.4,182.3 L830.6,181.3 L834.9,180.3 L839.1,179.3 L843.3,178.4 L847.4,177.5 L851.4,176.6 L855.5,175.7 L859.5,174.8 L863.6,173.9 L867.6,173.0 L871.7,172.2 L875.7,171.3 L879.8,170.5 L883.8,169.6 L887.9,168.8 L891.9,168.0 L896.0,167.2 L900.0,166.4 L904.1,165.7 L908.3,164.9 L912.4,164.2 L916.6,163.5 L920.8,162.7 L924.9,162.0 L929.1,161.3 L933.2,160.6 L937.4,159.9 L941.6,159.3 L945.7,158.7 L949.9,158.0 L954.1,157.5 L958.2,156.9 L962.4,156.4 L966.7,155.9 L971.0,155.4 L975.3,154.9 L979.6,154.4 L983.9,154.0 L988.2,153.5 L992.4,153.1 L996.7,152.7 L1001.0,152.3 L1005.3,151.9 L1009.6,151.6 L1013.9,151.3 L1018.2,151.0 L1023.3,150.6 L1028.3,150.3 L1033.4,150.2 L1037.5,150.2 L1041.5,150.2 L1045.6,150.2 L1049.7,150.2 L1053.8,150.2 L1057.8,150.2 L1061.9,150.2 L1066.0,150.2 L1070.1,150.2 L1074.1,150.2 L1078.2,150.2 L1082.3,150.3 L1086.4,150.3 L1090.4,150.3 L1094.5,150.3 L1098.6,150.3 L1102.7,150.3 L1106.7,150.4 L1110.8,150.4 L1112.7,151.4 L1117.0,151.5 L1121.2,151.5 L1125.5,151.5 L1129.8,151.6 L1134.9,151.9 L1139.9,152.4 L1145.0,152.9 L1150.7,153.6 L1156.4,154.2 L1161.5,154.6 L1166.6,155.0 L1171.7,155.5 L1176.7,156.0 L1181.8,156.5 L1186.8,157.0" stroke="#e83a28"/><path d="M47.1,357.4 L51.8,344.4 L53.3,332.4 L55.2,327.3 L57.7,326.0 L60.3,314.6 L60.9,305.7 L62.8,287.5 L64.9,272.8 L66.9,262.4 L70.2,258.5 L73.6,250.0 L75.2,247.5 L78.5,245.5 L83.1,243.4 L86.9,241.0 L90.7,239.3 L94.5,237.5 L98.3,236.4 L111.0,235.4 L121.1,233.9 L141.4,233.5 L143.3,233.1 L145.2,232.9 L146.7,232.8 L148.3,232.8 L149.8,232.7 L151.4,232.7 L152.9,232.6 L154.5,232.6 L156.0,232.5 L157.6,232.5 L159.1,232.4 L160.6,232.4 L162.2,232.4 L163.7,232.3 L165.3,232.3 L166.8,232.3 L168.4,232.3 L169.9,232.2 L171.5,232.2 L173.0,232.2 L174.6,232.2 L176.1,232.2 L177.6,232.1 L179.2,232.1 L180.7,232.1 L182.3,232.1 L183.8,232.1 L185.4,232.1 L186.9,232.1 L188.5,232.1 L190.0,232.1 L191.5,232.1 L193.0,232.1 L194.5,232.1 L196.0,232.1 L197.5,232.1 L199.0,232.1 L200.5,232.1 L202.0,232.1 L203.5,232.1 L205.0,232.1 L206.5,232.1 L208.0,232.1 L209.5,232.1 L211.0,232.1 L212.5,232.1 L214.0,232.1 L215.5,232.1 L217.0,232.1 L218.5,232.1 L220.0,232.1 L221.5,232.1 L223.0,232.1 L224.5,232.1 L226.0,232.1 L227.5,232.1 L229.0,232.1 L230.5,232.1 L232.0,232.1 L233.5,232.1 L235.0,232.1 L236.5,232.1 L238.0,232.1 L239.5,232.1 L241.0,232.1 L242.5,232.1 L244.0,232.1 L245.5,232.1 L247.0,232.1 L248.5,232.1 L250.0,232.1 L251.5,232.1 L253.0,232.1 L254.5,232.1 L256.0,232.1 L257.5,232.1 L259.0,232.1 L260.5,232.1 L262.0,232.1 L263.5,232.1 L265.0,232.1 L266.5,232.1 L268.0,232.1 L269.5,232.1 L271.0,232.1 L272.5,232.1 L274.0,232.1 L275.5,232.1 L277.0,232.1 L278.5,232.1 L280.0,232.1 L281.5,232.1 L283.0,232.1 L284.5,232.1 L286.0,232.2 L287.5,232.2 L289.0,232.2 L290.5,232.2 L292.0,232.2 L293.5,232.2 L295.0,232.2 L296.5,232.2 L298.0,232.2 L299.5,232.2 L301.0,232.2 L302.5,232.2 L304.0,232.2 L305.5,232.2 L307.0,232.2 L308.5,232.2 L310.0,232.2 L311.5,232.2 L313.0,232.2 L314.5,232.2 L316.0,232.2 L317.5,232.2 L319.0,232.2 L320.5,232.2 L322.0,232.2 L323.5,232.2 L325.0,232.2 L326.5,232.2 L328.0,232.2 L329.5,232.2 L331.0,232.2 L332.5,232.2 L334.0,232.2 L335.5,232.2 L337.0,232.2 L338.5,232.2 L340.0,232.2 L341.5,232.2 L343.0,232.3 L344.5,232.3 L346.0,232.3 L347.5,232.3 L349.0,232.3 L350.5,232.3 L352.0,232.3 L353.5,232.3 L355.0,232.3 L356.5,232.3 L358.0,232.3 L359.5,232.3 L361.0,232.3 L362.5,232.3 L364.0,232.3 L365.5,232.3 L367.0,232.3 L368.5,232.3 L370.0,232.3 L371.5,232.3 L373.0,232.3 L374.5,232.3 L376.0,232.3 L377.5,232.3 L379.0,232.4 L380.5,232.4 L382.0,232.4 L383.5,232.4 L385.0,232.4 L386.5,232.4 L388.0,232.4 L389.5,232.4 L391.0,232.4 L392.5,232.4 L394.0,232.4 L395.5,232.4 L397.0,232.4 L398.5,232.4 L400.0,232.4 L401.5,232.4 L403.0,232.4 L404.5,232.4 L406.0,232.4 L407.5,232.5 L409.0,232.5 L410.5,232.5 L412.0,232.5 L413.5,232.5 L415.0,232.5 L416.5,232.5 L418.0,232.5 L419.5,232.5 L421.1,232.5 L422.6,232.6 L424.2,232.6 L425.7,232.6 L427.3,232.7 L428.8,232.7 L430.3,232.8 L431.9,232.9 L433.4,232.9 L435.0,233.0 L436.5,233.1 L438.1,233.2 L439.6,233.3 L441.2,233.4 L442.7,233.5 L444.2,233.5 L445.8,233.6 L447.3,233.7 L448.9,233.8 L450.4,233.9 L452.0,234.0 L453.5,234.1 L455.1,234.2 L456.6,234.3 L458.2,234.4 L459.7,234.5 L461.3,234.6 L462.9,234.7 L464.4,234.9 L466.0,235.0 L467.5,235.1 L469.1,235.3 L470.6,235.4 L472.2,235.5 L473.8,235.6 L475.3,235.8 L476.9,235.9 L478.4,236.0 L480.0,236.1 L481.5,236.2 L483.0,236.3 L484.5,236.4 L486.1,236.5 L487.6,236.6 L489.1,236.7 L490.6,236.8 L492.1,236.9 L493.6,237.0 L495.2,237.1 L496.7,237.2 L498.2,237.3 L499.7,237.3 L501.2,237.4 L502.7,237.5 L504.3,237.6 L505.8,237.7 L507.3,237.8 L508.8,237.9 L510.3,238.0 L511.8,238.0 L513.4,238.1 L514.9,238.2 L516.4,238.3 L517.9,238.4 L519.4,238.5 L520.9,238.5 L522.5,238.6 L524.0,238.7 L525.5,238.8 L527.0,238.9 L528.5,239.0 L530.0,239.1 L531.5,239.1 L533.1,239.2 L534.6,239.3 L536.1,239.4 L537.6,239.5 L539.1,239.6 L540.6,239.7 L542.2,239.7 L543.7,239.8 L545.2,239.9 L546.7,240.0 L548.2,240.1 L549.7,240.2 L551.3,240.3 L552.8,240.4 L554.3,240.5 L555.8,240.6 L557.3,240.7 L558.8,240.8 L560.4,240.9 L561.9,241.0 L563.4,241.1 L564.9,241.2 L566.4,241.3 L567.9,241.4 L569.4,241.5 L570.9,241.6 L572.4,241.7 L574.0,241.8 L575.5,242.0 L577.0,242.1 L578.5,242.2 L580.0,242.3 L581.5,242.4 L583.0,242.5 L584.5,242.6 L586.0,242.8 L587.5,242.9 L589.1,243.0 L590.6,243.1 L592.1,243.2 L593.6,243.4 L595.1,243.5 L596.6,243.6 L598.1,243.8 L599.6,243.9 L601.1,244.0 L602.6,244.2 L604.2,244.3 L605.7,244.4 L607.2,244.6 L608.7,244.7 L610.2,244.9 L611.7,245.0 L613.2,245.2 L614.8,245.3 L616.4,245.5 L617.9,245.6 L619.5,245.8 L621.0,246.0 L622.6,246.2 L624.1,246.3 L625.7,246.5 L627.2,246.7 L628.8,246.9 L630.3,247.1 L631.9,247.3 L633.4,247.5 L635.0,247.7 L636.5,247.9 L638.1,248.1 L639.6,248.3 L641.1,248.5 L642.6,248.7 L644.2,248.9 L645.7,249.1 L647.2,249.4 L648.7,249.6 L650.2,249.8 L651.8,250.1 L653.3,250.3 L654.8,250.5 L656.3,250.8 L657.8,251.0 L659.4,251.2 L660.9,251.5 L662.4,251.7 L663.9,252.0 L665.4,252.3 L667.0,252.5 L668.5,252.8 L670.0,253.0 L671.5,253.3 L673.0,253.6 L674.6,253.8 L676.1,254.1 L677.6,254.4 L679.1,254.7 L680.6,255.0 L682.1,255.3 L683.6,255.5 L685.1,255.8 L686.6,256.2 L688.2,256.5 L689.7,256.8 L691.2,257.1 L692.7,257.4 L694.2,257.7 L695.7,258.1 L697.2,258.4 L698.7,258.7 L700.2,259.1 L701.7,259.4 L703.2,259.7 L704.7,260.1 L706.3,260.4 L707.8,260.8 L709.3,261.1 L710.8,261.4 L712.3,261.8 L713.8,262.1 L715.3,262.5 L716.8,262.8 L718.3,263.2 L719.8,263.5 L721.3,263.8 L722.8,264.2 L724.4,264.5 L725.9,264.9 L727.4,265.2 L728.9,265.5 L730.4,265.9 L731.9,266.2 L733.4,266.5 L734.9,266.8 L736.4,267.1 L737.9,267.4 L739.4,267.8 L740.9,268.1 L742.4,268.4 L743.9,268.7 L745.4,269.0 L746.9,269.3 L748.4,269.6 L749.9,269.9 L751.4,270.2 L752.9,270.5 L754.4,270.8 L755.9,271.1 L757.5,271.4 L759.0,271.7 L760.5,272.1 L762.0,272.4 L763.5,272.7 L765.0,273.0 L766.5,273.3 L768.0,273.6 L769.5,273.9 L771.0,274.2 L772.5,274.6 L774.0,274.9 L775.5,275.2 L777.0,275.5 L778.5,275.9 L780.0,276.2 L781.5,276.5 L783.0,276.9 L784.6,277.2 L786.1,277.6 L787.6,277.9 L789.1,278.3 L790.7,278.7 L792.2,279.0 L793.7,279.4 L795.2,279.8 L796.8,280.2 L798.3,280.5 L799.8,280.9 L801.3,281.3 L802.9,281.7 L804.4,282.1 L805.9,282.4 L807.4,282.8 L809.0,283.2 L810.5,283.6 L812.0,284.0 L813.5,284.4 L815.1,284.7 L816.6,285.1 L818.1,285.5 L819.6,285.9 L821.2,286.3 L822.7,286.6 L824.2,287.0 L825.7,287.4 L827.3,287.8 L828.8,288.1 L830.3,288.5 L831.8,288.9 L833.4,289.2 L834.9,289.6 L836.4,289.9 L837.9,290.3 L839.5,290.6 L841.0,291.0 L842.5,291.3 L844.0,291.6 L845.5,292.0 L847.1,292.3 L848.6,292.6 L850.1,293.0 L851.6,293.3 L853.2,293.6 L854.7,293.9 L856.2,294.3 L857.7,294.6 L859.3,294.9 L860.8,295.2 L862.3,295.5 L863.8,295.8 L865.4,296.2 L866.9,296.5 L868.4,296.8 L869.9,297.1 L871.5,297.4 L873.0,297.7 L874.5,298.0 L876.0,298.3 L877.6,298.6 L879.1,298.9 L880.6,299.2 L882.1,299.5 L883.7,299.8 L885.2,300.1 L886.7,300.4 L888.2,300.7 L889.8,301.0 L891.3,301.3 L892.8,301.6 L894.3,301.9 L895.9,302.1 L897.4,302.4 L898.9,302.7 L900.4,303.0 L902.0,303.3 L903.5,303.5 L905.0,303.8 L906.5,304.1 L908.0,304.3 L909.6,304.6 L911.1,304.9 L912.6,305.1 L914.1,305.4 L915.7,305.6 L917.2,305.9 L918.7,306.2 L920.2,306.4 L921.8,306.7 L923.3,306.9 L924.8,307.2 L926.3,307.4 L927.9,307.7 L929.4,307.9 L930.9,308.2 L932.4,308.4 L934.0,308.6 L935.5,308.9 L937.0,309.1 L938.5,309.4 L940.1,309.6 L941.6,309.8 L943.1,310.1 L944.6,310.3 L946.2,310.5 L947.7,310.8 L949.2,311.0 L950.7,311.2 L952.3,311.5 L953.8,311.7 L955.3,311.9 L956.8,312.2 L958.4,312.4 L959.9,312.6 L961.4,312.9 L962.9,313.1 L964.5,313.3 L966.0,313.6 L967.5,313.8 L969.0,314.0 L970.5,314.3 L972.0,314.5 L973.5,314.7 L975.0,315.0 L976.6,315.2 L978.1,315.4 L979.6,315.7 L981.1,315.9 L982.6,316.1 L984.1,316.4 L985.6,316.6 L987.1,316.8 L988.6,317.1 L990.1,317.3 L991.6,317.5 L993.1,317.8 L994.7,318.0 L996.2,318.2 L997.7,318.4 L999.2,318.7 L1000.7,318.9 L1002.2,319.1 L1003.7,319.3 L1005.2,319.5 L1006.7,319.7 L1008.2,319.9 L1009.7,320.2 L1011.3,320.4 L1012.8,320.6 L1014.3,320.7 L1015.8,320.9 L1017.3,321.1 L1018.8,321.3 L1020.4,321.5 L1021.9,321.7 L1023.5,321.8 L1025.0,322.0 L1026.6,322.2 L1028.2,322.3 L1029.7,322.5 L1031.3,322.6 L1032.8,322.8 L1034.4,322.9 L1036.0,323.1 L1037.5,323.2 L1039.1,323.4 L1040.6,323.5 L1042.2,323.7 L1043.8,323.9 L1045.3,324.0 L1046.9,324.2 L1048.4,324.3 L1050.0,324.4 L1051.6,324.7 L1053.2,324.7 L1054.7,325.0 L1056.3,325.0 L1057.9,325.2 L1059.5,325.5 L1061.0,325.9 L1062.6,325.7 L1064.2,325.9 L1065.8,326.3 L1067.3,326.7 L1068.9,326.6 L1070.5,326.7 L1072.0,327.3 L1073.6,326.8 L1075.2,327.6 L1076.7,327.3 L1078.2,327.3 L1079.7,327.5 L1081.3,327.8 L1082.8,328.5 L1084.3,328.0 L1085.8,328.6 L1087.3,328.9 L1088.8,328.7 L1090.4,329.1 L1091.9,328.7 L1093.4,328.9 L1094.9,329.2 L1096.4,330.0 L1097.9,329.9 L1099.5,329.9 L1101.0,330.4 L1102.5,330.4 L1104.0,330.4 L1105.5,331.3 L1107.0,331.4 L1108.5,331.0 L1110.0,331.6 L1111.5,331.8 L1113.0,332.5 L1114.5,332.5 L1116.0,332.1 L1117.5,333.2 L1119.0,332.2 L1120.5,332.8 L1122.0,333.4 L1123.5,332.6 L1125.0,333.2 L1126.6,332.6 L1128.1,333.6 L1129.6,333.8 L1131.1,333.5 L1132.7,334.0 L1134.2,333.3 L1135.7,333.9 L1137.2,333.8 L1138.8,333.9 L1140.3,333.8 L1141.8,334.5 L1143.4,334.9 L1145.0,334.6 L1146.5,335.3 L1148.1,335.0 L1149.7,336.4 L1151.2,336.8 L1152.8,337.6 L1154.4,337.5 L1156.0,336.7 L1157.5,336.8 L1159.1,337.2 L1160.6,336.3 L1162.2,336.9 L1163.7,336.5 L1165.3,336.5 L1166.8,336.6 L1168.3,338.1 L1169.8,337.8 L1171.3,338.6 L1172.8,339.3 L1174.3,340.2 L1175.9,339.1 L1177.5,339.6 L1179.0,339.8 L1180.6,340.2 L1182.2,340.1 L1183.8,340.2 L1185.3,339.4 L1186.9,339.6" stroke="#e83a28"/></g>
<line x1="46" x2="1189" y1="357.5" y2="357.5" stroke="#e83a28" stroke-width="1"/><rect x="676.900" y="80" width="1.200" height="278" fill="#f0f0f0"/><text x="1186" y="89.7" text-anchor="end" font-family='"Liberation Sans", sans-serif' font-style="italic" font-weight="bold" font-size="11.5" fill="#d4d4d4" textLength="64" lengthAdjust="spacingAndGlyphs">SpectraFoo</text>
<rect x="44" y="411" width="1146" height="282" fill="#4a4a4a"/>
<rect x="44" y="411" width="1" height="282" fill="#161616"/>
<rect x="44" y="692" width="1146" height="1" fill="#161616"/>
<rect x="45" y="412" width="1144" height="280" fill="#e0e0e0"/>
<rect x="46" y="413" width="1143" height="279" fill="#000"/>
<g stroke-width="1"><line x1="46" x2="1189" y1="677.68" y2="677.68" stroke="#2a2a2a"/><line x1="46" x2="1189" y1="671.09" y2="671.09" stroke="#5c5c5c"/><line x1="46" x2="1189" y1="664.51" y2="664.51" stroke="#2a2a2a"/><line x1="46" x2="1189" y1="657.93" y2="657.93" stroke="#2a2a2a"/><line x1="46" x2="1189" y1="651.35" y2="651.35" stroke="#5c5c5c"/><line x1="46" x2="1189" y1="644.76" y2="644.76" stroke="#2a2a2a"/><line x1="46" x2="1189" y1="638.18" y2="638.18" stroke="#2a2a2a"/><line x1="46" x2="1189" y1="631.60" y2="631.60" stroke="#5c5c5c"/><line x1="46" x2="1189" y1="625.01" y2="625.01" stroke="#2a2a2a"/><line x1="46" x2="1189" y1="618.43" y2="618.43" stroke="#2a2a2a"/><line x1="46" x2="1189" y1="611.85" y2="611.85" stroke="#5c5c5c"/><line x1="46" x2="1189" y1="605.26" y2="605.26" stroke="#2a2a2a"/><line x1="46" x2="1189" y1="598.68" y2="598.68" stroke="#2a2a2a"/><line x1="46" x2="1189" y1="592.10" y2="592.10" stroke="#5c5c5c"/><line x1="46" x2="1189" y1="585.51" y2="585.51" stroke="#2a2a2a"/><line x1="46" x2="1189" y1="578.93" y2="578.93" stroke="#2a2a2a"/><line x1="46" x2="1189" y1="572.35" y2="572.35" stroke="#5c5c5c"/><line x1="46" x2="1189" y1="565.77" y2="565.77" stroke="#2a2a2a"/><line x1="46" x2="1189" y1="559.18" y2="559.18" stroke="#2a2a2a"/><line x1="46" x2="1189" y1="552.60" y2="552.60" stroke="#1b4210" stroke-width="1.3"/><line x1="46" x2="1189" y1="546.02" y2="546.02" stroke="#2a2a2a"/><line x1="46" x2="1189" y1="539.43" y2="539.43" stroke="#2a2a2a"/><line x1="46" x2="1189" y1="532.85" y2="532.85" stroke="#5c5c5c"/><line x1="46" x2="1189" y1="526.27" y2="526.27" stroke="#2a2a2a"/><line x1="46" x2="1189" y1="519.69" y2="519.69" stroke="#2a2a2a"/><line x1="46" x2="1189" y1="513.10" y2="513.10" stroke="#5c5c5c"/><line x1="46" x2="1189" y1="506.52" y2="506.52" stroke="#2a2a2a"/><line x1="46" x2="1189" y1="499.94" y2="499.94" stroke="#2a2a2a"/><line x1="46" x2="1189" y1="493.35" y2="493.35" stroke="#5c5c5c"/><line x1="46" x2="1189" y1="486.77" y2="486.77" stroke="#2a2a2a"/><line x1="46" x2="1189" y1="480.19" y2="480.19" stroke="#2a2a2a"/><line x1="46" x2="1189" y1="473.60" y2="473.60" stroke="#5c5c5c"/><line x1="46" x2="1189" y1="467.02" y2="467.02" stroke="#2a2a2a"/><line x1="46" x2="1189" y1="460.44" y2="460.44" stroke="#2a2a2a"/><line x1="46" x2="1189" y1="453.86" y2="453.86" stroke="#5c5c5c"/><line x1="46" x2="1189" y1="447.27" y2="447.27" stroke="#2a2a2a"/><line x1="46" x2="1189" y1="440.69" y2="440.69" stroke="#2a2a2a"/><line x1="46" x2="1189" y1="434.11" y2="434.11" stroke="#5c5c5c"/><line x1="46" x2="1189" y1="427.52" y2="427.52" stroke="#2a2a2a"/><line x1="94.20" x2="94.20" y1="413" y2="692" stroke="#6c6c6c"/><line x1="99.70" x2="99.70" y1="413" y2="692" stroke="#3c3c3c"/><line x1="105.30" x2="105.30" y1="413" y2="692" stroke="#3c3c3c"/><line x1="111.30" x2="111.30" y1="413" y2="692" stroke="#3c3c3c"/><line x1="117.50" x2="117.50" y1="413" y2="692" stroke="#3c3c3c"/><line x1="124.20" x2="124.20" y1="413" y2="692" stroke="#3c3c3c"/><line x1="131.30" x2="131.30" y1="413" y2="692" stroke="#6c6c6c"/><line x1="140.00" x2="140.00" y1="413" y2="692" stroke="#3c3c3c"/><line x1="148.70" x2="148.70" y1="413" y2="692" stroke="#3c3c3c"/><line x1="158.00" x2="158.00" y1="413" y2="692" stroke="#3c3c3c"/><line x1="167.50" x2="167.50" y1="413" y2="692" stroke="#3c3c3c"/><line x1="177.50" x2="177.50" y1="413" y2="692" stroke="#3c3c3c"/><line x1="187.80" x2="187.80" y1="413" y2="692" stroke="#6c6c6c"/><line x1="200.30" x2="200.30" y1="413" y2="692" stroke="#3c3c3c"/><line x1="211.70" x2="211.70" y1="413" y2="692" stroke="#3c3c3c"/><line x1="223.30" x2="223.30" y1="413" y2="692" stroke="#3c3c3c"/><line x1="236.50" x2="236.50" y1="413" y2="692" stroke="#3c3c3c"/><line x1="249.70" x2="249.70" y1="413" y2="692" stroke="#3c3c3c"/><line x1="263.80" x2="263.80" y1="413" y2="692" stroke="#6c6c6c"/><line x1="278.00" x2="278.00" y1="413" y2="692" stroke="#3c3c3c"/><line x1="293.00" x2="293.00" y1="413" y2="692" stroke="#3c3c3c"/><line x1="308.00" x2="308.00" y1="413" y2="692" stroke="#3c3c3c"/><line x1="323.00" x2="323.00" y1="413" y2="692" stroke="#3c3c3c"/><line x1="338.70" x2="338.70" y1="413" y2="692" stroke="#3c3c3c"/><line x1="354.70" x2="354.70" y1="413" y2="692" stroke="#6c6c6c"/><line x1="371.70" x2="371.70" y1="413" y2="692" stroke="#3c3c3c"/><line x1="387.50" x2="387.50" y1="413" y2="692" stroke="#3c3c3c"/><line x1="404.70" x2="404.70" y1="413" y2="692" stroke="#3c3c3c"/><line x1="422.30" x2="422.30" y1="413" y2="692" stroke="#3c3c3c"/><line x1="439.20" x2="439.20" y1="413" y2="692" stroke="#3c3c3c"/><line x1="457.00" x2="457.00" y1="413" y2="692" stroke="#6c6c6c"/><line x1="474.70" x2="474.70" y1="413" y2="692" stroke="#3c3c3c"/><line x1="492.50" x2="492.50" y1="413" y2="692" stroke="#3c3c3c"/><line x1="510.50" x2="510.50" y1="413" y2="692" stroke="#3c3c3c"/><line x1="528.70" x2="528.70" y1="413" y2="692" stroke="#3c3c3c"/><line x1="547.00" x2="547.00" y1="413" y2="692" stroke="#3c3c3c"/><line x1="564.70" x2="564.70" y1="413" y2="692" stroke="#6c6c6c"/><line x1="583.30" x2="583.30" y1="413" y2="692" stroke="#3c3c3c"/><line x1="601.70" x2="601.70" y1="413" y2="692" stroke="#3c3c3c"/><line x1="619.80" x2="619.80" y1="413" y2="692" stroke="#3c3c3c"/><line x1="638.70" x2="638.70" y1="413" y2="692" stroke="#3c3c3c"/><line x1="657.50" x2="657.50" y1="413" y2="692" stroke="#3c3c3c"/><line x1="676.70" x2="676.70" y1="413" y2="692" stroke="#6c6c6c"/><line x1="695.30" x2="695.30" y1="413" y2="692" stroke="#3c3c3c"/><line x1="714.20" x2="714.20" y1="413" y2="692" stroke="#3c3c3c"/><line x1="732.80" x2="732.80" y1="413" y2="692" stroke="#3c3c3c"/><line x1="751.70" x2="751.70" y1="413" y2="692" stroke="#3c3c3c"/><line x1="770.80" x2="770.80" y1="413" y2="692" stroke="#3c3c3c"/><line x1="789.70" x2="789.70" y1="413" y2="692" stroke="#6c6c6c"/><line x1="808.70" x2="808.70" y1="413" y2="692" stroke="#3c3c3c"/><line x1="827.50" x2="827.50" y1="413" y2="692" stroke="#3c3c3c"/><line x1="846.70" x2="846.70" y1="413" y2="692" stroke="#3c3c3c"/><line x1="865.50" x2="865.50" y1="413" y2="692" stroke="#3c3c3c"/><line x1="884.70" x2="884.70" y1="413" y2="692" stroke="#3c3c3c"/><line x1="904.20" x2="904.20" y1="413" y2="692" stroke="#6c6c6c"/><line x1="923.00" x2="923.00" y1="413" y2="692" stroke="#3c3c3c"/><line x1="942.20" x2="942.20" y1="413" y2="692" stroke="#3c3c3c"/><line x1="961.30" x2="961.30" y1="413" y2="692" stroke="#3c3c3c"/><line x1="980.30" x2="980.30" y1="413" y2="692" stroke="#3c3c3c"/><line x1="999.50" x2="999.50" y1="413" y2="692" stroke="#3c3c3c"/><line x1="1018.30" x2="1018.30" y1="413" y2="692" stroke="#6c6c6c"/><line x1="1038.70" x2="1038.70" y1="413" y2="692" stroke="#3c3c3c"/><line x1="1057.00" x2="1057.00" y1="413" y2="692" stroke="#3c3c3c"/><line x1="1075.80" x2="1075.80" y1="413" y2="692" stroke="#3c3c3c"/><line x1="1095.30" x2="1095.30" y1="413" y2="692" stroke="#3c3c3c"/><line x1="1114.20" x2="1114.20" y1="413" y2="692" stroke="#3c3c3c"/><line x1="1133.70" x2="1133.70" y1="413" y2="692" stroke="#6c6c6c"/><line x1="1152.50" x2="1152.50" y1="413" y2="692" stroke="#3c3c3c"/><line x1="1172.50" x2="1172.50" y1="413" y2="692" stroke="#3c3c3c"/></g>
<g font-family='"Liberation Sans", sans-serif' font-size="10.7" fill="#111"><line x1="40" x2="44" y1="677.68" y2="677.68" stroke="#777"/><line x1="37.5" x2="44" y1="671.09" y2="671.09" stroke="#1a1a1a"/><text x="37" y="675.5" text-anchor="end">-180.00</text><line x1="40" x2="44" y1="664.51" y2="664.51" stroke="#777"/><line x1="40" x2="44" y1="657.93" y2="657.93" stroke="#777"/><line x1="37.5" x2="44" y1="651.35" y2="651.35" stroke="#1a1a1a"/><text x="37" y="655.7" text-anchor="end">-150.00</text><line x1="40" x2="44" y1="644.76" y2="644.76" stroke="#777"/><line x1="40" x2="44" y1="638.18" y2="638.18" stroke="#777"/><line x1="37.5" x2="44" y1="631.60" y2="631.60" stroke="#1a1a1a"/><text x="37" y="636.0" text-anchor="end">-120.00</text><line x1="40" x2="44" y1="625.01" y2="625.01" stroke="#777"/><line x1="40" x2="44" y1="618.43" y2="618.43" stroke="#777"/><line x1="37.5" x2="44" y1="611.85" y2="611.85" stroke="#1a1a1a"/><text x="37" y="616.2" text-anchor="end">-90.00</text><line x1="40" x2="44" y1="605.26" y2="605.26" stroke="#777"/><line x1="40" x2="44" y1="598.68" y2="598.68" stroke="#777"/><line x1="37.5" x2="44" y1="592.10" y2="592.10" stroke="#1a1a1a"/><text x="37" y="596.5" text-anchor="end">-60.00</text><line x1="40" x2="44" y1="585.51" y2="585.51" stroke="#777"/><line x1="40" x2="44" y1="578.93" y2="578.93" stroke="#777"/><line x1="37.5" x2="44" y1="572.35" y2="572.35" stroke="#1a1a1a"/><text x="37" y="576.7" text-anchor="end">-30.00</text><line x1="40" x2="44" y1="565.77" y2="565.77" stroke="#777"/><line x1="40" x2="44" y1="559.18" y2="559.18" stroke="#777"/><line x1="37.5" x2="44" y1="552.60" y2="552.60" stroke="#1a1a1a"/><text x="37" y="557.0" text-anchor="end">+0.00</text><line x1="40" x2="44" y1="546.02" y2="546.02" stroke="#777"/><line x1="40" x2="44" y1="539.43" y2="539.43" stroke="#777"/><line x1="37.5" x2="44" y1="532.85" y2="532.85" stroke="#1a1a1a"/><text x="37" y="537.3" text-anchor="end">+30.00</text><line x1="40" x2="44" y1="526.27" y2="526.27" stroke="#777"/><line x1="40" x2="44" y1="519.69" y2="519.69" stroke="#777"/><line x1="37.5" x2="44" y1="513.10" y2="513.10" stroke="#1a1a1a"/><text x="37" y="517.5" text-anchor="end">+60.00</text><line x1="40" x2="44" y1="506.52" y2="506.52" stroke="#777"/><line x1="40" x2="44" y1="499.94" y2="499.94" stroke="#777"/><line x1="37.5" x2="44" y1="493.35" y2="493.35" stroke="#1a1a1a"/><text x="37" y="497.8" text-anchor="end">+90.00</text><line x1="40" x2="44" y1="486.77" y2="486.77" stroke="#777"/><line x1="40" x2="44" y1="480.19" y2="480.19" stroke="#777"/><line x1="37.5" x2="44" y1="473.60" y2="473.60" stroke="#1a1a1a"/><text x="37" y="478.0" text-anchor="end">+120.00</text><line x1="40" x2="44" y1="467.02" y2="467.02" stroke="#777"/><line x1="40" x2="44" y1="460.44" y2="460.44" stroke="#777"/><line x1="37.5" x2="44" y1="453.86" y2="453.86" stroke="#1a1a1a"/><text x="37" y="458.3" text-anchor="end">+150.00</text><line x1="40" x2="44" y1="447.27" y2="447.27" stroke="#777"/><line x1="40" x2="44" y1="440.69" y2="440.69" stroke="#777"/><line x1="37.5" x2="44" y1="434.11" y2="434.11" stroke="#1a1a1a"/><text x="37" y="438.5" text-anchor="end">+180.00</text><line x1="40" x2="44" y1="427.52" y2="427.52" stroke="#777"/><line x1="94.20" x2="94.20" y1="693" y2="700" stroke="#1a1a1a"/><text x="94.2" y="711" text-anchor="middle">8</text><line x1="99.70" x2="99.70" y1="693" y2="697" stroke="#444"/><line x1="105.30" x2="105.30" y1="693" y2="697" stroke="#444"/><line x1="111.30" x2="111.30" y1="693" y2="697" stroke="#444"/><line x1="117.50" x2="117.50" y1="693" y2="697" stroke="#444"/><line x1="124.20" x2="124.20" y1="693" y2="697" stroke="#444"/><line x1="131.30" x2="131.30" y1="693" y2="700" stroke="#1a1a1a"/><text x="131.3" y="711" text-anchor="middle">16</text><line x1="140.00" x2="140.00" y1="693" y2="697" stroke="#444"/><line x1="148.70" x2="148.70" y1="693" y2="697" stroke="#444"/><line x1="158.00" x2="158.00" y1="693" y2="697" stroke="#444"/><line x1="167.50" x2="167.50" y1="693" y2="697" stroke="#444"/><line x1="177.50" x2="177.50" y1="693" y2="697" stroke="#444"/><line x1="187.80" x2="187.80" y1="693" y2="700" stroke="#1a1a1a"/><text x="187.8" y="711" text-anchor="middle">31</text><line x1="200.30" x2="200.30" y1="693" y2="697" stroke="#444"/><line x1="211.70" x2="211.70" y1="693" y2="697" stroke="#444"/><line x1="223.30" x2="223.30" y1="693" y2="697" stroke="#444"/><line x1="236.50" x2="236.50" y1="693" y2="697" stroke="#444"/><line x1="249.70" x2="249.70" y1="693" y2="697" stroke="#444"/><line x1="263.80" x2="263.80" y1="693" y2="700" stroke="#1a1a1a"/><text x="263.8" y="711" text-anchor="middle">63</text><line x1="278.00" x2="278.00" y1="693" y2="697" stroke="#444"/><line x1="293.00" x2="293.00" y1="693" y2="697" stroke="#444"/><line x1="308.00" x2="308.00" y1="693" y2="697" stroke="#444"/><line x1="323.00" x2="323.00" y1="693" y2="697" stroke="#444"/><line x1="338.70" x2="338.70" y1="693" y2="697" stroke="#444"/><line x1="354.70" x2="354.70" y1="693" y2="700" stroke="#1a1a1a"/><text x="354.7" y="711" text-anchor="middle">125</text><line x1="371.70" x2="371.70" y1="693" y2="697" stroke="#444"/><line x1="387.50" x2="387.50" y1="693" y2="697" stroke="#444"/><line x1="404.70" x2="404.70" y1="693" y2="697" stroke="#444"/><line x1="422.30" x2="422.30" y1="693" y2="697" stroke="#444"/><line x1="439.20" x2="439.20" y1="693" y2="697" stroke="#444"/><line x1="457.00" x2="457.00" y1="693" y2="700" stroke="#1a1a1a"/><text x="457.0" y="711" text-anchor="middle">250</text><line x1="474.70" x2="474.70" y1="693" y2="697" stroke="#444"/><line x1="492.50" x2="492.50" y1="693" y2="697" stroke="#444"/><line x1="510.50" x2="510.50" y1="693" y2="697" stroke="#444"/><line x1="528.70" x2="528.70" y1="693" y2="697" stroke="#444"/><line x1="547.00" x2="547.00" y1="693" y2="697" stroke="#444"/><line x1="564.70" x2="564.70" y1="693" y2="700" stroke="#1a1a1a"/><text x="564.7" y="711" text-anchor="middle">500</text><line x1="583.30" x2="583.30" y1="693" y2="697" stroke="#444"/><line x1="601.70" x2="601.70" y1="693" y2="697" stroke="#444"/><line x1="619.80" x2="619.80" y1="693" y2="697" stroke="#444"/><line x1="638.70" x2="638.70" y1="693" y2="697" stroke="#444"/><line x1="657.50" x2="657.50" y1="693" y2="697" stroke="#444"/><line x1="676.70" x2="676.70" y1="693" y2="700" stroke="#1a1a1a"/><text x="676.7" y="711" text-anchor="middle">1k</text><line x1="695.30" x2="695.30" y1="693" y2="697" stroke="#444"/><line x1="714.20" x2="714.20" y1="693" y2="697" stroke="#444"/><line x1="732.80" x2="732.80" y1="693" y2="697" stroke="#444"/><line x1="751.70" x2="751.70" y1="693" y2="697" stroke="#444"/><line x1="770.80" x2="770.80" y1="693" y2="697" stroke="#444"/><line x1="789.70" x2="789.70" y1="693" y2="700" stroke="#1a1a1a"/><text x="789.7" y="711" text-anchor="middle">2k</text><line x1="808.70" x2="808.70" y1="693" y2="697" stroke="#444"/><line x1="827.50" x2="827.50" y1="693" y2="697" stroke="#444"/><line x1="846.70" x2="846.70" y1="693" y2="697" stroke="#444"/><line x1="865.50" x2="865.50" y1="693" y2="697" stroke="#444"/><line x1="884.70" x2="884.70" y1="693" y2="697" stroke="#444"/><line x1="904.20" x2="904.20" y1="693" y2="700" stroke="#1a1a1a"/><text x="904.2" y="711" text-anchor="middle">4k</text><line x1="923.00" x2="923.00" y1="693" y2="697" stroke="#444"/><line x1="942.20" x2="942.20" y1="693" y2="697" stroke="#444"/><line x1="961.30" x2="961.30" y1="693" y2="697" stroke="#444"/><line x1="980.30" x2="980.30" y1="693" y2="697" stroke="#444"/><line x1="999.50" x2="999.50" y1="693" y2="697" stroke="#444"/><line x1="1018.30" x2="1018.30" y1="693" y2="700" stroke="#1a1a1a"/><text x="1018.3" y="711" text-anchor="middle">8k</text><line x1="1038.70" x2="1038.70" y1="693" y2="697" stroke="#444"/><line x1="1057.00" x2="1057.00" y1="693" y2="697" stroke="#444"/><line x1="1075.80" x2="1075.80" y1="693" y2="697" stroke="#444"/><line x1="1095.30" x2="1095.30" y1="693" y2="697" stroke="#444"/><line x1="1114.20" x2="1114.20" y1="693" y2="697" stroke="#444"/><line x1="1133.70" x2="1133.70" y1="693" y2="700" stroke="#1a1a1a"/><text x="1133.7" y="711" text-anchor="middle">16k</text><line x1="1152.50" x2="1152.50" y1="693" y2="697" stroke="#444"/><line x1="1172.50" x2="1172.50" y1="693" y2="697" stroke="#444"/></g>
<g fill="none" stroke-width="1" stroke-linejoin="round" shape-rendering="crispEdges"><path d="M48.0,552.8 L50.0,556.0 L53.0,565.0 L56.0,570.0 L58.5,569.0 L60.5,560.0 L62.5,553.0 L64.0,545.0 L65.6,535.4 L68.3,533.3 L70.9,520.5 L72.5,500.2 L74.7,483.7 L76.8,483.1 L80.0,484.7 L85.9,484.2 L88.0,487.9 L92.3,503.4 L99.7,509.8 L108.3,513.5 L114.7,516.2 L120.0,519.0 L131.0,522.5 L135.3,523.3 L139.6,524.2 L143.9,525.0 L148.2,525.7 L152.5,526.3 L157.5,526.9 L162.5,527.3 L167.5,527.5 L171.6,527.5 L175.7,527.5 L179.8,527.5 L183.9,527.5 L188.0,527.5 L192.0,527.5 L196.1,527.5 L200.2,527.5 L204.3,527.5 L208.4,527.5 L212.5,527.5 L216.9,527.4 L221.2,527.1 L225.6,526.7 L230.0,526.3 L235.0,526.0 L240.0,525.5 L242.5,523.3 L246.0,525.0 L250.7,524.6 L255.3,523.9 L260.0,523.3 L264.2,523.0 L268.3,522.8 L272.5,522.6 L276.7,522.4 L280.8,522.2 L285.0,522.0 L289.3,521.7 L293.6,521.4 L297.9,521.1 L302.1,520.8 L306.4,520.5 L310.7,520.3 L315.0,520.0 L319.4,519.7 L323.8,519.5 L328.1,519.2 L332.5,519.0 L336.9,518.7 L341.2,518.6 L345.6,518.4 L350.0,518.3 L354.4,518.2 L358.9,518.2 L363.3,518.1 L367.7,518.1 L372.1,518.0 L376.6,518.0 L381.0,518.0 L381.5,522.5 L382.5,522.5 L383.0,518.0 L387.5,517.6 L392.0,517.3 L396.5,517.1 L401.0,517.0 L405.5,517.0 L410.0,517.0 L414.3,517.0 L418.6,517.1 L423.0,517.1 L427.3,517.2 L431.6,517.3 L435.9,517.5 L440.2,517.6 L444.5,517.8 L448.9,518.0 L453.2,518.1 L457.5,518.3 L461.8,518.5 L466.0,518.7 L470.2,519.0 L474.5,519.3 L478.8,519.6 L483.0,519.9 L487.2,520.3 L491.5,520.6 L495.8,521.0 L500.0,521.3 L504.0,521.6 L508.0,521.9 L512.0,522.2 L516.0,522.5 L520.0,522.8 L524.0,523.1 L528.0,523.5 L532.0,523.8 L536.0,524.1 L540.0,524.5 L544.2,524.9 L548.3,525.3 L552.5,525.7 L556.7,526.1 L560.8,526.6 L565.0,527.0 L569.4,527.4 L573.8,527.9 L578.1,528.3 L582.5,528.7 L586.9,529.1 L591.2,529.6 L595.6,530.0 L600.0,530.5 L604.2,531.0 L608.3,531.5 L612.5,532.0 L616.7,532.5 L620.8,533.0 L625.0,533.6 L629.2,534.1 L633.3,534.6 L637.5,535.0 L641.7,535.4 L645.8,535.8 L650.0,536.1 L654.2,536.5 L658.3,536.8 L662.5,537.2 L666.7,537.5 L670.8,537.9 L675.0,538.3 L679.2,538.7 L683.3,539.2 L687.5,539.6 L691.7,540.1 L695.8,540.6 L700.0,541.0 L704.6,541.5 L709.2,542.0 L713.8,542.4 L718.3,542.9 L722.9,543.4 L727.5,543.8 L731.7,544.2 L735.8,544.6 L740.0,544.9 L744.2,545.3 L748.3,545.6 L752.5,546.0 L756.7,546.3 L760.8,546.7 L765.0,547.0 L769.2,547.3 L773.3,547.6 L777.5,547.9 L781.7,548.2 L785.8,548.5 L790.0,548.8 L794.3,549.1 L798.6,549.3 L802.9,549.6 L807.1,549.8 L811.4,550.1 L815.7,550.3 L820.0,550.5 L824.2,550.7 L828.3,550.8 L832.5,551.0 L836.7,551.1 L840.8,551.2 L845.0,551.4 L849.2,551.5 L853.3,551.6 L857.5,551.8 L861.6,552.0 L865.6,552.2 L869.7,552.3 L873.8,552.5 L877.8,552.7 L881.9,552.9 L885.9,553.1 L890.0,553.3 L894.1,553.5 L898.1,553.6 L902.2,553.8 L906.2,553.9 L910.3,554.0 L914.4,554.2 L918.4,554.3 L922.5,554.5 L926.8,554.7 L931.1,554.8 L935.4,555.0 L939.6,555.2 L943.9,555.3 L948.2,555.6 L952.5,555.8 L956.9,556.1 L961.2,556.6 L965.6,557.1 L970.0,557.5 L974.0,557.9 L978.0,558.2 L982.0,558.6 L986.0,558.9 L990.0,559.3 L995.1,559.8 L1000.2,560.4 L1004.8,561.1 L1009.4,561.8 L1013.9,562.7 L1018.5,563.5 L1022.8,564.4 L1027.1,565.5 L1031.3,566.6 L1035.6,567.6 L1039.9,568.4 L1044.2,568.7 L1048.4,568.7 L1052.5,568.8 L1056.7,568.8 L1060.9,568.8 L1065.0,568.8 L1069.2,568.9 L1073.3,568.9 L1077.5,568.9 L1081.7,568.9 L1085.8,568.9 L1090.0,569.0 L1094.6,569.4 L1099.2,570.2 L1103.7,571.3 L1108.3,572.3 L1112.6,573.4 L1116.9,574.7 L1121.2,576.0 L1125.4,577.3 L1129.7,578.3 L1134.0,578.8 L1138.3,579.0 L1142.6,579.3 L1146.8,579.4 L1151.1,579.6 L1155.4,579.7 L1159.7,579.7 L1165.2,579.5 L1170.7,579.3 L1178.0,581.5 L1183.5,585.2 L1187.2,589.8" stroke="#e0a030"/><path d="M48.0,552.8 L51.0,565.0 L53.0,579.0 L55.0,591.0 L55.5,597.5 L58.0,597.5 L59.5,593.0 L60.5,586.0 L61.5,578.0 L62.5,568.0 L63.5,555.0 L64.5,545.0 L66.5,537.0 L68.5,532.0 L70.5,518.0 L72.3,500.2 L74.5,483.7 L79.5,490.6 L83.7,501.8 L86.9,503.4 L92.3,507.1 L99.7,513.5 L104.0,517.3 L107.2,522.6 L114.7,526.9 L120.0,529.0 L131.0,536.3 L135.1,537.5 L139.2,538.7 L143.4,539.9 L147.5,541.3 L151.7,543.2 L155.8,545.3 L160.0,547.0 L164.5,548.3 L169.0,549.4 L173.5,550.4 L178.0,551.4 L182.5,552.5 L187.1,553.7 L191.7,555.0 L196.2,556.3 L200.8,557.6 L205.4,558.9 L210.0,560.0 L214.2,560.9 L218.3,561.8 L222.5,562.6 L226.7,563.4 L230.8,564.2 L235.0,565.0 L239.3,565.9 L243.6,566.7 L247.9,567.6 L252.1,568.5 L256.4,569.3 L260.7,570.1 L265.0,570.8 L269.3,571.5 L273.6,572.1 L277.9,572.7 L282.1,573.3 L286.4,573.9 L290.7,574.5 L295.0,575.0 L299.6,575.5 L304.2,576.0 L308.8,576.5 L313.3,577.0 L317.9,577.5 L322.5,578.0 L327.1,578.6 L331.7,579.1 L336.2,579.7 L340.8,580.3 L345.4,580.9 L350.0,581.3 L354.2,581.6 L358.3,581.9 L362.5,582.2 L366.7,582.4 L370.8,582.7 L375.0,583.0 L379.4,583.4 L383.8,583.9 L388.1,584.3 L392.5,584.5 L396.9,584.6 L401.2,584.6 L405.6,584.6 L410.0,584.7 L415.0,585.1 L420.0,585.5 L424.2,585.5 L428.3,585.5 L432.5,585.5 L436.7,585.4 L440.8,585.4 L445.0,585.4 L449.2,585.3 L453.3,585.3 L457.5,585.2 L461.7,585.1 L465.8,585.1 L470.0,585.0 L474.3,584.9 L478.6,584.8 L482.9,584.6 L487.1,584.4 L491.4,584.2 L495.7,584.0 L500.0,583.8 L504.0,583.6 L508.0,583.5 L512.0,583.3 L516.0,583.1 L520.0,583.0 L524.0,582.8 L528.0,582.6 L532.0,582.4 L536.0,582.2 L540.0,582.0 L544.2,581.7 L548.3,581.4 L552.5,581.1 L556.7,580.7 L560.8,580.3 L565.0,580.0 L569.4,579.7 L573.8,579.4 L578.1,579.1 L582.5,578.7 L586.9,578.4 L591.2,578.1 L595.6,577.8 L600.0,577.5 L604.2,577.2 L608.3,576.8 L612.5,576.5 L616.7,576.1 L620.8,575.8 L625.0,575.5 L629.2,575.2 L633.3,574.9 L637.5,574.6 L641.7,574.3 L645.8,574.0 L650.0,573.7 L654.2,573.5 L658.3,573.2 L662.5,573.0 L666.7,572.8 L670.8,572.7 L675.0,572.5 L679.2,572.3 L683.3,572.1 L687.5,571.9 L691.7,571.7 L695.8,571.5 L700.0,571.3 L704.6,571.0 L709.2,570.7 L713.8,570.4 L718.3,570.1 L722.9,569.8 L727.5,569.5 L731.7,569.3 L735.8,569.0 L740.0,568.8 L744.2,568.6 L748.3,568.3 L752.5,568.1 L756.7,567.9 L760.8,567.7 L765.0,567.5 L769.2,567.3 L773.3,567.1 L777.5,566.9 L781.7,566.7 L785.8,566.5 L790.0,566.3 L794.1,566.1 L798.2,566.0 L802.3,565.8 L806.4,565.6 L810.5,565.5 L814.5,565.3 L818.6,565.1 L822.7,565.0 L826.8,564.8 L830.9,564.7 L835.0,564.5 L839.3,564.3 L843.6,564.1 L847.9,563.9 L852.1,563.7 L856.4,563.6 L860.7,563.4 L865.0,563.3 L869.2,563.2 L873.3,563.1 L877.5,563.1 L881.7,563.0 L885.8,562.9 L890.0,562.8 L894.2,562.8 L898.3,562.7 L902.5,562.7 L906.7,562.6 L910.8,562.6 L915.0,562.5 L919.2,562.5 L923.3,562.5 L927.5,562.5 L931.7,562.5 L935.8,562.6 L940.0,562.6 L944.2,562.7 L948.3,562.8 L952.5,562.9 L956.7,563.0 L960.8,563.2 L965.0,563.3 L969.2,563.4 L973.3,563.6 L977.5,563.7 L981.7,563.9 L985.8,564.2 L990.0,564.5 L995.1,565.4 L1000.2,566.5 L1004.8,567.2 L1009.4,567.9 L1013.9,568.6 L1018.5,569.2 L1022.5,569.9 L1026.6,570.6 L1030.6,571.3 L1034.7,571.8 L1038.7,572.0 L1043.0,572.0 L1047.2,572.1 L1051.5,572.1 L1055.8,572.1 L1060.1,572.1 L1064.3,572.1 L1068.6,572.2 L1072.9,572.2 L1077.2,572.2 L1081.5,572.2 L1085.7,572.3 L1090.0,572.3 L1094.6,572.5 L1099.2,573.1 L1103.7,573.8 L1108.3,574.5 L1112.6,575.4 L1116.9,576.5 L1121.2,577.8 L1125.4,579.0 L1129.7,580.0 L1134.0,580.6 L1138.3,580.9 L1142.6,581.3 L1146.8,581.5 L1151.1,581.7 L1155.4,581.9 L1159.7,581.9 L1165.2,581.5 L1170.7,581.1 L1178.0,583.3 L1183.5,587.0 L1187.2,591.6" stroke="#e0a030"/><path d="M48.0,552.8 L49.5,555.0 L52.5,564.0 L55.5,573.0 L57.5,573.0 L59.5,563.0 L60.5,553.0 L61.0,542.0 L61.9,529.0 L62.9,515.1 L64.0,500.2 L65.6,479.9 L66.1,473.0 L68.3,472.7 L75.2,481.5 L80.5,485.8 L85.9,490.6 L92.3,503.4 L94.4,502.9 L99.7,510.3 L104.0,512.5 L108.3,517.8 L114.7,519.4 L120.0,524.5 L122.5,526.3 L135.0,531.3 L139.4,532.2 L143.8,533.2 L148.1,534.1 L152.5,535.0 L156.5,535.8 L160.5,536.7 L164.5,537.5 L168.5,538.2 L172.5,538.8 L176.8,539.3 L181.1,539.7 L185.4,540.0 L189.6,540.4 L193.9,540.7 L198.2,541.0 L202.5,541.3 L206.6,541.6 L210.6,542.0 L214.7,542.3 L218.8,542.7 L222.8,543.0 L226.9,543.3 L230.9,543.6 L235.0,543.8 L239.3,544.0 L243.6,544.2 L247.9,544.4 L252.1,544.6 L256.4,544.8 L260.7,544.9 L265.0,545.0 L269.3,545.1 L273.6,545.2 L277.9,545.3 L282.1,545.4 L286.4,545.4 L290.7,545.5 L295.0,545.5 L299.1,545.5 L303.1,545.5 L307.2,545.5 L311.3,545.5 L315.4,545.5 L319.4,545.5 L323.5,545.5 L327.6,545.5 L331.7,545.5 L335.7,545.5 L339.8,545.5 L343.9,545.5 L348.0,545.5 L352.0,545.5 L356.1,545.5 L360.2,545.5 L364.3,545.5 L368.3,545.5 L372.4,545.5 L376.5,545.5 L380.6,545.5 L384.6,545.5 L388.7,545.5 L392.8,545.5 L396.9,545.5 L400.9,545.5 L405.0,545.5 L410.0,544.8 L414.3,544.6 L418.6,544.5 L423.0,544.4 L427.3,544.3 L431.6,544.2 L435.9,544.2 L440.2,544.1 L444.5,544.1 L448.9,544.0 L453.2,543.9 L457.5,543.8 L461.8,543.7 L466.0,543.5 L470.2,543.4 L474.5,543.2 L478.8,543.0 L483.0,542.8 L487.2,542.6 L491.5,542.4 L495.8,542.2 L500.0,542.0 L504.0,541.8 L508.0,541.6 L512.0,541.3 L516.0,541.1 L520.0,540.8 L524.0,540.5 L528.0,540.3 L532.0,540.0 L536.0,539.7 L540.0,539.5 L544.2,539.2 L548.3,539.0 L552.5,538.7 L556.7,538.5 L560.8,538.2 L565.0,538.0 L569.4,537.8 L573.8,537.6 L578.1,537.3 L582.5,537.1 L586.9,536.9 L591.2,536.7 L595.6,536.5 L600.0,536.3 L604.2,536.1 L608.3,535.9 L612.5,535.7 L616.7,535.4 L620.8,535.2 L625.0,535.0 L629.2,534.8 L633.3,534.5 L637.5,534.3 L641.7,534.0 L645.8,533.8 L650.0,533.5 L654.2,533.2 L658.3,532.9 L662.5,532.6 L666.7,532.3 L670.8,532.0 L675.0,531.8 L679.2,531.6 L683.3,531.4 L687.5,531.3 L691.7,531.1 L695.8,531.0 L700.0,530.8 L704.6,530.6 L709.2,530.3 L713.8,529.9 L718.3,529.7 L722.9,529.4 L727.5,529.3 L731.7,529.2 L735.8,529.2 L740.0,529.1 L744.2,529.1 L748.3,529.0 L752.5,529.0 L756.7,528.9 L760.8,528.9 L765.0,528.9 L769.2,528.9 L773.3,528.8 L777.5,528.8 L781.7,528.8 L785.8,528.8 L790.0,528.8 L794.2,528.8 L798.5,528.8 L802.7,528.8 L806.9,528.9 L811.2,528.9 L815.4,529.0 L819.6,529.0 L823.8,529.1 L828.1,529.2 L832.3,529.2 L836.5,529.3 L840.8,529.4 L845.0,529.5 L849.6,529.6 L854.2,529.8 L858.8,530.1 L863.3,530.3 L867.9,530.6 L872.5,530.8 L876.6,531.0 L880.6,531.1 L884.7,531.2 L888.8,531.4 L892.8,531.5 L896.9,531.6 L900.9,531.8 L905.0,532.0 L909.3,532.2 L913.6,532.5 L917.9,532.8 L922.1,533.2 L926.4,533.5 L930.7,533.9 L935.0,534.3 L939.3,534.7 L943.6,535.1 L947.9,535.4 L952.1,535.9 L956.4,536.3 L960.7,536.9 L965.0,537.5 L970.0,538.5 L975.0,539.9 L980.0,541.2 L984.0,542.2 L988.1,543.1 L992.1,544.0 L996.2,544.9 L1000.2,545.8 L1004.8,546.7 L1009.4,547.6 L1013.9,548.5 L1018.5,549.4 L1022.5,550.3 L1026.6,551.3 L1030.6,552.3 L1034.7,553.3 L1038.7,554.0 L1043.3,554.6 L1047.8,555.2 L1052.4,555.7 L1057.0,556.2 L1061.6,556.8 L1066.2,557.5 L1070.7,558.2 L1075.3,558.6 L1079.3,558.8 L1083.4,559.0 L1087.4,559.1 L1091.5,559.3 L1095.5,559.5 L1100.1,560.2 L1104.7,561.4 L1109.2,562.8 L1113.8,564.1 L1117.8,565.2 L1121.9,566.2 L1125.9,567.3 L1130.0,568.5 L1134.0,569.6 L1139.5,571.6 L1145.0,572.9 L1149.3,573.0 L1153.6,573.1 L1157.8,573.1 L1162.1,573.1 L1166.4,573.2 L1170.7,573.3 L1178.0,576.0 L1183.5,579.7 L1187.2,584.3" stroke="#e83a28"/><path d="M48.0,552.8 L49.5,555.0 L52.5,563.0 L55.5,571.0 L57.8,570.0 L59.7,564.0 L61.5,554.0 L62.5,542.0 L64.5,527.9 L66.1,518.3 L68.3,517.3 L70.9,504.5 L73.1,490.6 L74.7,482.1 L76.3,482.0 L84.8,490.6 L86.9,490.1 L92.3,504.5 L95.0,504.0 L100.0,511.0 L105.0,514.0 L110.0,518.8 L125.0,527.5 L126.6,528.1 L128.2,528.7 L129.8,529.3 L131.4,529.9 L133.0,530.5 L134.5,531.2 L136.1,531.7 L137.7,532.3 L139.3,532.8 L140.9,533.3 L142.5,533.8 L144.0,534.2 L145.5,534.6 L147.0,535.0 L148.5,535.3 L150.0,535.7 L151.5,536.0 L153.0,536.4 L154.5,536.7 L156.0,537.0 L157.5,537.3 L159.0,537.6 L160.5,537.9 L162.0,538.2 L163.5,538.5 L165.0,538.7 L166.5,539.0 L168.0,539.3 L169.5,539.5 L171.0,539.8 L172.5,540.0 L174.0,540.2 L175.5,540.5 L177.0,540.7 L178.5,540.9 L180.0,541.1 L181.5,541.3 L183.0,541.5 L184.5,541.7 L186.0,541.9 L187.5,542.0 L189.0,542.2 L190.5,542.4 L192.0,542.6 L193.5,542.7 L195.0,542.9 L196.5,543.1 L198.0,543.3 L199.5,543.4 L201.0,543.6 L202.5,543.8 L204.0,544.0 L205.6,544.2 L207.1,544.4 L208.6,544.6 L210.1,544.8 L211.7,545.0 L213.2,545.2 L214.7,545.4 L216.2,545.5 L217.8,545.7 L219.3,545.9 L220.8,546.1 L222.4,546.3 L223.9,546.4 L225.4,546.6 L226.9,546.7 L228.5,546.9 L230.0,547.0 L231.5,547.1 L233.0,547.2 L234.5,547.3 L236.0,547.4 L237.5,547.5 L239.0,547.6 L240.5,547.7 L242.0,547.8 L243.5,547.9 L245.0,548.0 L246.5,548.0 L248.0,548.1 L249.5,548.2 L251.0,548.3 L252.5,548.4 L254.0,548.4 L255.5,548.5 L257.0,548.6 L258.5,548.7 L260.0,548.8 L261.6,548.9 L263.1,549.0 L264.7,549.1 L266.2,549.2 L267.8,549.3 L269.4,549.5 L270.9,549.6 L272.5,549.7 L274.1,549.8 L275.6,549.9 L277.2,550.0 L278.8,550.1 L280.3,550.2 L281.9,550.3 L283.4,550.4 L285.0,550.5 L286.5,550.6 L288.0,550.6 L289.5,550.7 L291.0,550.8 L292.5,550.8 L294.0,550.9 L295.5,551.0 L297.0,551.0 L298.5,551.1 L300.0,551.1 L301.5,551.2 L303.0,551.2 L304.5,551.3 L306.0,551.3 L307.5,551.4 L309.0,551.5 L310.5,551.5 L312.0,551.6 L313.5,551.7 L315.0,551.8 L316.5,551.9 L318.0,552.0 L319.5,552.2 L321.0,552.4 L322.5,552.5 L324.0,552.7 L325.5,552.9 L327.0,553.0 L328.5,553.2 L330.0,553.3 L331.5,553.4 L333.0,553.5 L334.5,553.6 L336.0,553.7 L337.5,553.8 L339.0,553.9 L340.5,554.0 L342.0,554.0 L343.5,554.1 L345.0,554.2 L346.5,554.3 L348.0,554.3 L349.5,554.4 L351.0,554.5 L352.5,554.6 L354.0,554.6 L355.5,554.7 L357.0,554.8 L358.5,554.9 L360.0,555.0 L361.6,555.1 L363.2,555.2 L364.8,555.3 L366.4,555.5 L368.0,555.6 L369.5,555.7 L371.1,555.8 L372.7,556.0 L374.3,556.1 L375.9,556.2 L377.5,556.3 L379.0,556.4 L380.6,556.5 L382.1,556.6 L383.7,556.7 L385.2,556.8 L386.7,557.0 L388.3,557.1 L389.8,557.2 L391.3,557.2 L392.9,557.3 L394.4,557.4 L396.0,557.5 L397.5,557.5 L399.1,557.5 L400.6,557.6 L402.2,557.6 L403.8,557.6 L405.3,557.6 L406.9,557.6 L408.4,557.7 L410.0,557.7 L411.5,557.7 L413.1,557.8 L414.6,557.9 L416.1,557.9 L417.7,558.0 L419.2,558.1 L420.7,558.2 L422.3,558.3 L423.8,558.4 L425.3,558.5 L426.9,558.6 L428.4,558.8 L429.9,558.9 L431.5,559.0 L433.0,559.2 L434.5,559.3 L436.0,559.5 L437.6,559.6 L439.1,559.7 L440.6,559.9 L442.2,560.0 L443.7,560.2 L445.2,560.3 L446.8,560.5 L448.3,560.6 L449.8,560.7 L451.4,560.8 L452.9,561.0 L454.4,561.1 L456.0,561.2 L457.5,561.3 L459.0,561.4 L460.5,561.5 L462.1,561.6 L463.6,561.7 L465.1,561.8 L466.6,561.9 L468.1,562.0 L469.6,562.0 L471.2,562.1 L472.7,562.2 L474.2,562.3 L475.7,562.4 L477.2,562.5 L478.8,562.6 L480.3,562.6 L481.8,562.7 L483.3,562.8 L484.8,562.9 L486.3,563.0 L487.9,563.1 L489.4,563.1 L490.9,563.2 L492.4,563.3 L493.9,563.4 L495.4,563.5 L497.0,563.6 L498.5,563.7 L500.0,563.8 L501.5,563.9 L503.1,564.0 L504.6,564.1 L506.2,564.2 L507.7,564.3 L509.2,564.4 L510.8,564.5 L512.3,564.6 L513.8,564.7 L515.4,564.8 L516.9,565.0 L518.5,565.1 L520.0,565.2 L521.5,565.3 L523.1,565.4 L524.6,565.5 L526.2,565.6 L527.7,565.8 L529.2,565.9 L530.8,566.0 L532.3,566.1 L533.8,566.3 L535.4,566.4 L536.9,566.5 L538.5,566.7 L540.0,566.8 L541.6,566.9 L543.1,567.1 L544.7,567.3 L546.2,567.4 L547.8,567.6 L549.4,567.8 L550.9,567.9 L552.5,568.1 L554.1,568.3 L555.6,568.5 L557.2,568.7 L558.8,568.8 L560.3,569.0 L561.9,569.2 L563.4,569.3 L565.0,569.5 L566.5,569.6 L568.0,569.8 L569.6,569.9 L571.1,570.1 L572.6,570.2 L574.1,570.3 L575.7,570.5 L577.2,570.6 L578.7,570.7 L580.2,570.8 L581.7,571.0 L583.3,571.1 L584.8,571.2 L586.3,571.3 L587.8,571.4 L589.3,571.6 L590.9,571.7 L592.4,571.8 L593.9,572.0 L595.4,572.1 L597.0,572.2 L598.5,572.4 L600.0,572.5 L601.5,572.6 L603.0,572.8 L604.5,572.9 L606.0,573.1 L607.5,573.2 L609.0,573.4 L610.5,573.5 L612.0,573.7 L613.5,573.8 L615.0,574.0 L616.5,574.2 L618.0,574.3 L619.5,574.5 L621.0,574.6 L622.5,574.8 L624.0,575.0 L625.5,575.1 L627.0,575.3 L628.5,575.4 L630.0,575.6 L631.5,575.7 L633.0,575.9 L634.5,576.0 L636.0,576.2 L637.5,576.3 L639.0,576.4 L640.5,576.6 L642.0,576.7 L643.5,576.8 L645.0,577.0 L646.5,577.1 L648.0,577.2 L649.5,577.4 L651.0,577.5 L652.5,577.6 L654.0,577.7 L655.5,577.9 L657.0,578.0 L658.5,578.1 L660.0,578.2 L661.5,578.4 L663.0,578.5 L664.5,578.6 L666.0,578.7 L667.5,578.9 L669.0,579.0 L670.5,579.1 L672.0,579.2 L673.5,579.4 L675.0,579.5 L676.6,579.6 L678.1,579.8 L679.7,579.9 L681.2,580.1 L682.8,580.2 L684.4,580.4 L685.9,580.5 L687.5,580.7 L689.1,580.8 L690.6,581.0 L692.2,581.1 L693.8,581.2 L695.3,581.4 L696.9,581.5 L698.4,581.7 L700.0,581.8 L701.5,581.9 L703.0,582.0 L704.5,582.2 L706.0,582.3 L707.5,582.4 L709.0,582.5 L710.5,582.6 L712.0,582.8 L713.5,582.9 L715.0,583.0 L716.6,583.1 L718.1,583.3 L719.7,583.4 L721.2,583.5 L722.8,583.6 L724.4,583.8 L725.9,583.9 L727.5,584.0 L729.1,584.2 L730.6,584.3 L732.2,584.4 L733.8,584.5 L735.3,584.7 L736.9,584.8 L738.4,584.9 L740.0,585.0 L741.5,585.1 L743.0,585.2 L744.5,585.3 L746.0,585.4 L747.5,585.5 L749.0,585.6 L750.5,585.7 L752.0,585.8 L753.5,585.9 L755.0,586.0 L756.5,586.0 L758.0,586.1 L759.5,586.2 L761.0,586.2 L762.5,586.3 L764.0,586.4 L765.6,586.4 L767.1,586.5 L768.6,586.5 L770.1,586.6 L771.7,586.6 L773.2,586.7 L774.7,586.7 L776.2,586.8 L777.8,586.8 L779.3,586.9 L780.8,586.9 L782.4,586.9 L783.9,586.9 L785.4,587.0 L786.9,587.0 L788.5,587.0 L790.0,587.0 L791.5,587.0 L793.0,587.0 L794.5,587.0 L796.0,587.0 L797.5,587.0 L799.0,587.0 L800.5,587.0 L802.0,587.0 L803.5,587.0 L805.0,587.0 L806.5,587.0 L808.0,587.0 L809.5,587.0 L811.0,587.0 L812.5,587.0 L814.0,587.0 L815.5,587.0 L817.0,587.0 L818.5,587.0 L820.0,587.0 L821.5,587.0 L823.0,587.0 L824.5,587.0 L826.0,587.0 L827.5,587.0 L829.0,587.0 L830.6,587.0 L832.1,587.0 L833.7,586.9 L835.2,586.9 L836.8,586.8 L838.3,586.8 L839.9,586.7 L841.4,586.7 L843.0,586.6 L844.5,586.6 L846.1,586.5 L847.6,586.4 L849.2,586.3 L850.7,586.3 L852.3,586.2 L853.8,586.1 L855.4,586.0 L856.9,585.9 L858.5,585.9 L860.0,585.8 L861.6,585.7 L863.1,585.6 L864.7,585.6 L866.2,585.5 L867.8,585.4 L869.4,585.3 L870.9,585.2 L872.5,585.1 L874.1,585.0 L875.6,584.9 L877.2,584.8 L878.8,584.7 L880.3,584.6 L881.9,584.5 L883.4,584.4 L885.0,584.3 L886.5,584.2 L888.0,584.1 L889.5,584.0 L891.0,583.9 L892.5,583.9 L894.0,583.8 L895.5,583.7 L897.0,583.6 L898.5,583.5 L900.0,583.4 L901.5,583.3 L903.0,583.2 L904.5,583.1 L906.0,583.1 L907.5,583.0 L909.0,582.9 L910.5,582.8 L912.0,582.7 L913.5,582.6 L915.0,582.5 L916.6,582.4 L918.1,582.3 L919.7,582.2 L921.2,582.0 L922.8,581.9 L924.4,581.8 L925.9,581.6 L927.5,581.5 L929.1,581.4 L930.6,581.2 L932.2,581.1 L933.8,581.0 L935.3,580.9 L936.9,580.9 L938.4,580.8 L940.0,580.8 L941.5,580.8 L943.1,580.8 L944.6,580.8 L946.2,580.7 L947.7,580.7 L949.2,580.7 L950.8,580.7 L952.3,580.7 L953.8,580.7 L955.4,580.7 L956.9,580.7 L958.5,580.7 L960.0,580.7 L961.5,580.6 L963.1,580.6 L964.6,580.7 L966.2,580.5 L967.7,580.6 L969.2,580.6 L970.8,580.4 L972.3,580.6 L973.8,580.3 L975.4,580.6 L976.9,580.3 L978.5,580.3 L980.0,580.5 L981.6,580.9 L983.1,580.3 L984.7,580.4 L986.2,580.9 L987.8,581.4 L989.3,581.1 L990.9,581.0 L992.4,581.9 L994.0,580.7 L995.5,582.1 L997.1,581.3 L998.6,581.2 L1000.2,581.2 L1001.7,581.7 L1003.2,582.8 L1004.8,581.7 L1006.3,582.6 L1007.8,582.9 L1009.4,582.5 L1010.9,583.1 L1012.4,582.2 L1013.9,582.3 L1015.5,582.7 L1017.0,584.0 L1018.5,583.5 L1020.1,583.3 L1021.6,584.1 L1023.2,583.9 L1024.7,583.6 L1026.3,585.0 L1027.8,584.9 L1029.4,583.8 L1030.9,584.8 L1032.5,584.7 L1034.0,585.7 L1035.6,585.4 L1037.1,584.2 L1038.7,586.0 L1040.2,583.8 L1041.8,584.6 L1043.3,585.4 L1044.8,583.8 L1046.3,584.7 L1047.8,583.4 L1049.4,585.0 L1050.9,585.2 L1052.4,584.7 L1054.0,585.4 L1055.5,583.9 L1057.0,584.8 L1058.5,584.5 L1060.0,584.4 L1061.6,583.9 L1063.1,584.8 L1064.6,585.0 L1066.2,583.7 L1067.7,584.0 L1069.2,582.3 L1070.7,583.9 L1072.2,583.6 L1073.8,584.4 L1075.3,583.8 L1076.9,582.3 L1078.4,582.4 L1080.0,583.0 L1081.5,581.2 L1083.1,582.2 L1084.6,581.3 L1086.2,581.0 L1087.7,580.7 L1089.3,582.4 L1090.8,580.7 L1092.4,580.9 L1093.9,581.2 L1095.5,582.5 L1097.0,580.4 L1098.5,581.4 L1100.1,581.8 L1101.6,582.8 L1103.1,582.7 L1104.7,583.0 L1106.2,581.7 L1107.7,582.2 L1109.2,582.3 L1110.8,583.9 L1112.3,584.3 L1113.8,582.4 L1115.4,582.7 L1116.9,583.2 L1118.5,583.7 L1120.0,584.9 L1121.6,585.7 L1123.1,585.4 L1124.7,585.2 L1126.2,586.9 L1127.8,587.2 L1129.3,588.2 L1130.9,589.6 L1132.4,589.1 L1134.0,588.8 L1135.6,589.2 L1137.1,589.4 L1138.7,587.9 L1140.3,590.2 L1141.9,589.9 L1143.4,590.2 L1145.0,590.0 L1146.6,588.9 L1148.3,588.9 L1149.9,588.1 L1151.5,589.5 L1153.2,587.9 L1154.8,587.9 L1156.4,588.2 L1158.1,588.0 L1159.7,588.4 L1161.3,587.5 L1162.8,587.0 L1164.4,587.0 L1166.0,586.4 L1167.6,586.6 L1169.1,585.5 L1170.7,587.6 L1172.5,587.1 L1174.3,586.4 L1176.2,587.4 L1178.0,588.4 L1179.8,589.4 L1181.7,590.0 L1183.5,593.4 L1185.3,595.9 L1187.2,597.0" stroke="#e83a28"/></g>
<rect x="676.900" y="413" width="1.200" height="279" fill="#f0f0f0"/>
<rect x="0" y="43" width="2.700" height="703" fill="#a0a0a0"/><rect x="2.700" y="43" width="1" height="703" fill="#dcdcdc"/>
</svg>
<div class="abs cur" style="top:66px">1.01 kHz</div>
<div class="abs cur" style="top:400px">1.01 kHz</div>
<div id="ov" class="abs" style="left:661px;top:413px;width:527px;height:101px">
<div class="abs" style="left:0;top:0;width:527px;height:14px;background:linear-gradient(#f6f6f6,#d8d8d8);border-bottom:1px solid #a0a0a0;text-align:center;font-size:10.5px;line-height:15px">Overlay List</div>
<div class="abs gl" style="left:4.7px;top:2.0px"></div>
<div class="abs gl" style="left:21.7px;top:2.0px"></div>
<div class="abs gl" style="left:38.6px;top:2.0px"></div>
<div class="abs" style="left:0;top:15px;width:527px;height:12px;background:linear-gradient(#e2e2e2,#d6d6d6);border-bottom:1px solid #b4b4b4"></div>
<span class="abs ovb" style="left:1.5px;top:15.5px">Snapshot Name</span>
<span class="abs ovb" style="left:127.5px;width:40px;text-align:center;top:15.5px">V</span>
<span class="abs ovb" style="left:145px;width:40px;text-align:center;top:15.5px">S</span>
<span class="abs ovb" style="left:162px;width:40px;text-align:center;top:15.5px">I</span>
<span class="abs ovb" style="left:331px;width:40px;text-align:center;top:15.5px">Fade</span>
<div class="abs" style="left:515px;top:15px;width:12px;height:12px;border-left:1px solid #bbb"><div class="abs" style="left:3px;top:2px;border-left:7px solid #111;border-top:4px solid transparent;border-bottom:4px solid transparent"></div></div>
<div class="abs sw" style="left:2px;top:30px"><div style="background:#fbf04a"></div></div>
<span class="abs ovb" style="left:18px;top:31px">L-Mid lowest freq cut</span>
<div class="abs cb" style="left:142.5px;top:30.5px"></div>
<div class="abs cb" style="left:159.5px;top:30.5px"></div>
<div class="abs cb" style="left:176.5px;top:30.5px"></div>
<div class="abs pop" style="left:193.5px;top:29.5px;width:311.0px"><span class="ovb" style="position:absolute;left:4px;top:0">None</span><div class="st"><i class="u"></i><i class="d"></i></div></div>
<div class="abs sw" style="left:2px;top:45px"><div style="background:#e5392a"></div></div>
<span class="abs ovb" style="left:18px;top:46px">EQ HF boost</span>
<div class="abs cb on" style="left:142.5px;top:45.5px"><svg width="14" height="14" viewBox="0 0 14 14" style="position:absolute;left:0;top:-4px"><path d="M2.5 8 L5.2 11.6 L10.6 1.2" fill="none" stroke="#111" stroke-width="1.9" stroke-linecap="round" stroke-linejoin="round"/></svg></div>
<div class="abs cb" style="left:159.5px;top:45.5px"></div>
<div class="abs cb" style="left:176.5px;top:45.5px"></div>
<div class="abs pop" style="left:193.5px;top:44.5px;width:313.0px"><span class="ovb" style="position:absolute;left:4px;top:0">None</span><div class="st"><i class="u"></i><i class="d"></i></div></div>
<div class="abs sw" style="left:2px;top:60px"><div style="background:#e5392a"></div></div>
<span class="abs ovb" style="left:18px;top:61px">EQ HF cut</span>
<div class="abs cb on" style="left:142.5px;top:60.5px"><svg width="14" height="14" viewBox="0 0 14 14" style="position:absolute;left:0;top:-4px"><path d="M2.5 8 L5.2 11.6 L10.6 1.2" fill="none" stroke="#111" stroke-width="1.9" stroke-linecap="round" stroke-linejoin="round"/></svg></div>
<div class="abs cb" style="left:159.5px;top:60.5px"></div>
<div class="abs cb" style="left:176.5px;top:60.5px"></div>
<div class="abs pop" style="left:193.5px;top:59.5px;width:313.0px"><span class="ovb" style="position:absolute;left:4px;top:0">None</span><div class="st"><i class="u"></i><i class="d"></i></div></div>
<div class="abs sw" style="left:2px;top:75px"><div style="background:#f0b43c"></div></div>
<span class="abs ovb" style="left:18px;top:76px">EQ LF boost</span>
<div class="abs cb on" style="left:142.5px;top:75.5px"><svg width="14" height="14" viewBox="0 0 14 14" style="position:absolute;left:0;top:-4px"><path d="M2.5 8 L5.2 11.6 L10.6 1.2" fill="none" stroke="#111" stroke-width="1.9" stroke-linecap="round" stroke-linejoin="round"/></svg></div>
<div class="abs cb" style="left:159.5px;top:75.5px"></div>
<div class="abs cb" style="left:176.5px;top:75.5px"></div>
<div class="abs pop" style="left:193.5px;top:74.5px;width:313.0px"><span class="ovb" style="position:absolute;left:4px;top:0">None</span><div class="st"><i class="u"></i><i class="d"></i></div></div>
<div class="abs sw" style="left:2px;top:90px"><div style="background:#eda436"></div></div>
<span class="abs ovb" style="left:18px;top:91px">EQ LF cut</span>
<div class="abs cb on" style="left:142.5px;top:90.5px"><svg width="14" height="14" viewBox="0 0 14 14" style="position:absolute;left:0;top:-4px"><path d="M2.5 8 L5.2 11.6 L10.6 1.2" fill="none" stroke="#111" stroke-width="1.9" stroke-linecap="round" stroke-linejoin="round"/></svg></div>
<div class="abs cb" style="left:159.5px;top:90.5px"></div>
<div class="abs cb" style="left:176.5px;top:90.5px"></div>
<div class="abs pop" style="left:193.5px;top:89.5px;width:313.0px"><span class="ovb" style="position:absolute;left:4px;top:0">None</span><div class="st"><i class="u"></i><i class="d"></i></div></div>
<div class="abs" style="left:515px;top:28px;width:12px;height:61px;background:linear-gradient(90deg,#d8d8d8,#fafafa 40%,#fff 70%,#e4e4e4);border-left:1px solid #c4c4c4"></div>
<div class="abs" style="left:515.5px;top:38px;width:11px;height:19px;border-radius:6px;background:linear-gradient(90deg,#2a64d0,#6fa8f4 45%,#4a86e6 70%,#2458c0);box-shadow:0 0 0 0.5px #1c4aa8"></div>
<div class="abs" style="left:518px;top:63.5px;border-bottom:6px solid #666;border-left:3.5px solid transparent;border-right:3.5px solid transparent"></div>
<div class="abs" style="left:515px;top:74px;width:13px;height:1px;background:#c8c8c8"></div>
<div class="abs" style="left:518px;top:78.5px;border-top:6px solid #666;border-left:3.5px solid transparent;border-right:3.5px solid transparent"></div>
<div class="abs" style="left:515px;top:89px;width:13px;height:1px;background:#c8c8c8"></div>
<svg class="abs" style="left:517px;top:91px" width="11" height="11"><path d="M10 1 L1 10 M10 4.5 L4.5 10 M10 8 L8 10" stroke="#aaa" stroke-width="1" fill="none"/></svg>
</div>
<div class="abs" style="left:1197px;top:21px;width:3px;height:725px;background:linear-gradient(to right,#929292,#bcbcbc)"></div>
<div class="abs" style="left:1184px;top:731px;width:13px;height:14px;background:#fafafa"><svg width="13" height="14" style="position:absolute;left:0;top:0"><path d="M12.500 2 L1 13.500 M12.500 6 L5 13.500 M12.500 10 L9 13.500" stroke="#8a8a8a" stroke-width="1.100" fill="none"/></svg></div>
<div class="abs" style="left:0;top:742.5px;width:1200px;height:3.5px;background:linear-gradient(#e4e4e4,#c8c8c8 40%,#8a8a8a)"></div>
<div class="abs" style="left:0;top:746px;width:175px;height:4px;background:#0c0c0c"></div>
<div class="abs" style="left:175px;top:746px;width:1025px;height:4px;background:#4e4e4e"></div>
<div class="abs" style="left:3px;top:727px;width:12px;height:12px;background:#5fd53b;border:1px solid #2c5a1c"><div class="abs" style="left:1px;top:1px;width:8.5px;height:8.5px;border:0.8px solid #1c4a10;border-radius:50%"></div><div class="abs" style="left:5.6px;top:2.5px;width:1px;height:7px;background:#1c4a10"></div></div>
<div class="abs" style="left:18.5px;top:727px;width:27px;height:10px;border:2px solid #4a4a4a;background:#e4e4e4;font-size:10.5px;letter-spacing:-.3px;font-weight:bold;line-height:10px;text-align:center;color:#111">Solo</div>
<div class="abs" style="left:50.5px;top:726.5px;width:12px;height:13px;border:1px solid #6a6a6a;border-radius:3px;background:linear-gradient(#f0f0f0,#cfcfcf)"><svg width="12" height="13" style="position:absolute;left:0;top:0"><g fill="none" stroke="#222" stroke-width=".9"><circle cx="3.600" cy="4.200" r="1.400"/><circle cx="3.600" cy="8.800" r="1.400"/></g><g fill="#222"><rect x="6.500" y="3.200" width="1.200" height="1.200"/><rect x="8.800" y="3.200" width="1.200" height="1.200"/><rect x="6.500" y="8.500" width="1.200" height="1.200"/><rect x="8.800" y="8.500" width="1.200" height="1.200"/></g></svg></div>
<div class="abs pill" style="left:67px;width:88px">Take Snapshot...</div>
<div class="abs pill" style="left:160px;width:75px">Overlay List...</div>
<div class="abs pill" style="left:240px;width:60px">Clear Data</div>
</body></html>
